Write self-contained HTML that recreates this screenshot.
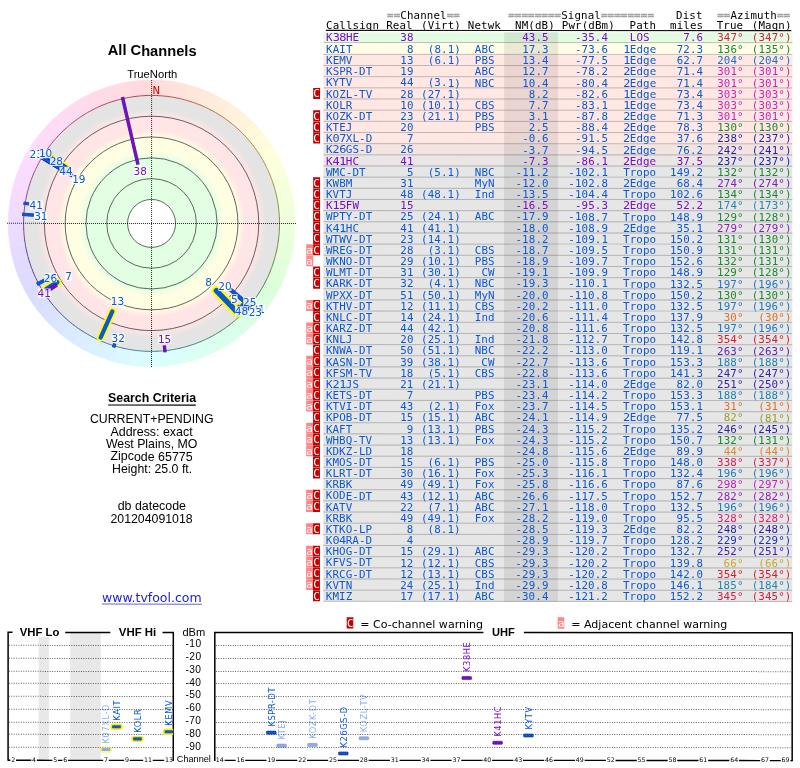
<!DOCTYPE html>
<html lang="en"><head><meta charset="utf-8"><title>TV Fool - All Channels</title>
<style>html,body{margin:0;padding:0;background:#fff}svg{display:block;will-change:transform}</style></head>
<body>
<svg width="800" height="768" viewBox="0 0 800 768">
<defs>
<radialGradient id="zones" gradientUnits="userSpaceOnUse" cx="151.5" cy="223.5" r="128">
<stop offset="0.0000" stop-color="#e3ffe3"/>
<stop offset="0.5125" stop-color="#e3ffe3"/>
<stop offset="0.5742" stop-color="#fffee3"/>
<stop offset="0.6750" stop-color="#fffee3"/>
<stop offset="0.7305" stop-color="#ffe5e5"/>
<stop offset="0.8375" stop-color="#ffe5e5"/>
<stop offset="0.8953" stop-color="#e4e4e4"/>
<stop offset="1.0000" stop-color="#e4e4e4"/>
</radialGradient>
<clipPath id="cv"><rect x="0" y="600" width="173.4" height="160"/></clipPath>
<clipPath id="cu"><rect x="214.9" y="600" width="577.4" height="160"/></clipPath>
</defs>
<rect width="800" height="768" fill="#fff"/>
<g transform="rotate(0.02 400 384)">
<g id="radar">
<path d="M151.5 223.5 L144.00 80.30 A143.4 143.4 0 0 1 159.00 80.30 Z" fill="#ffdbdb" stroke="#ffdbdb" stroke-width="0.5"/>
<path d="M151.5 223.5 L159.00 80.30 A143.4 143.4 0 0 1 173.93 81.87 Z" fill="#ffdfdb" stroke="#ffdfdb" stroke-width="0.5"/>
<path d="M151.5 223.5 L173.93 81.87 A143.4 143.4 0 0 1 188.61 84.99 Z" fill="#ffe2db" stroke="#ffe2db" stroke-width="0.5"/>
<path d="M151.5 223.5 L188.61 84.99 A143.4 143.4 0 0 1 202.89 89.62 Z" fill="#ffe6db" stroke="#ffe6db" stroke-width="0.5"/>
<path d="M151.5 223.5 L202.89 89.62 A143.4 143.4 0 0 1 216.60 95.73 Z" fill="#ffeadb" stroke="#ffeadb" stroke-width="0.5"/>
<path d="M151.5 223.5 L216.60 95.73 A143.4 143.4 0 0 1 229.60 103.23 Z" fill="#ffeddb" stroke="#ffeddb" stroke-width="0.5"/>
<path d="M151.5 223.5 L229.60 103.23 A143.4 143.4 0 0 1 241.74 112.06 Z" fill="#fff1db" stroke="#fff1db" stroke-width="0.5"/>
<path d="M151.5 223.5 L241.74 112.06 A143.4 143.4 0 0 1 252.90 122.10 Z" fill="#fff4db" stroke="#fff4db" stroke-width="0.5"/>
<path d="M151.5 223.5 L252.90 122.10 A143.4 143.4 0 0 1 262.94 133.26 Z" fill="#fff8db" stroke="#fff8db" stroke-width="0.5"/>
<path d="M151.5 223.5 L262.94 133.26 A143.4 143.4 0 0 1 271.77 145.40 Z" fill="#fffbdb" stroke="#fffbdb" stroke-width="0.5"/>
<path d="M151.5 223.5 L271.77 145.40 A143.4 143.4 0 0 1 279.27 158.40 Z" fill="#ffffdb" stroke="#ffffdb" stroke-width="0.5"/>
<path d="M151.5 223.5 L279.27 158.40 A143.4 143.4 0 0 1 285.38 172.11 Z" fill="#fbffdb" stroke="#fbffdb" stroke-width="0.5"/>
<path d="M151.5 223.5 L285.38 172.11 A143.4 143.4 0 0 1 290.01 186.39 Z" fill="#f8ffdb" stroke="#f8ffdb" stroke-width="0.5"/>
<path d="M151.5 223.5 L290.01 186.39 A143.4 143.4 0 0 1 293.13 201.07 Z" fill="#f4ffdb" stroke="#f4ffdb" stroke-width="0.5"/>
<path d="M151.5 223.5 L293.13 201.07 A143.4 143.4 0 0 1 294.70 216.00 Z" fill="#f1ffdb" stroke="#f1ffdb" stroke-width="0.5"/>
<path d="M151.5 223.5 L294.70 216.00 A143.4 143.4 0 0 1 294.70 231.00 Z" fill="#edffdb" stroke="#edffdb" stroke-width="0.5"/>
<path d="M151.5 223.5 L294.70 231.00 A143.4 143.4 0 0 1 293.13 245.93 Z" fill="#eaffdb" stroke="#eaffdb" stroke-width="0.5"/>
<path d="M151.5 223.5 L293.13 245.93 A143.4 143.4 0 0 1 290.01 260.61 Z" fill="#e6ffdb" stroke="#e6ffdb" stroke-width="0.5"/>
<path d="M151.5 223.5 L290.01 260.61 A143.4 143.4 0 0 1 285.38 274.89 Z" fill="#e2ffdb" stroke="#e2ffdb" stroke-width="0.5"/>
<path d="M151.5 223.5 L285.38 274.89 A143.4 143.4 0 0 1 279.27 288.60 Z" fill="#dfffdb" stroke="#dfffdb" stroke-width="0.5"/>
<path d="M151.5 223.5 L279.27 288.60 A143.4 143.4 0 0 1 271.77 301.60 Z" fill="#dbffdb" stroke="#dbffdb" stroke-width="0.5"/>
<path d="M151.5 223.5 L271.77 301.60 A143.4 143.4 0 0 1 262.94 313.74 Z" fill="#dbffdf" stroke="#dbffdf" stroke-width="0.5"/>
<path d="M151.5 223.5 L262.94 313.74 A143.4 143.4 0 0 1 252.90 324.90 Z" fill="#dbffe2" stroke="#dbffe2" stroke-width="0.5"/>
<path d="M151.5 223.5 L252.90 324.90 A143.4 143.4 0 0 1 241.74 334.94 Z" fill="#dbffe6" stroke="#dbffe6" stroke-width="0.5"/>
<path d="M151.5 223.5 L241.74 334.94 A143.4 143.4 0 0 1 229.60 343.77 Z" fill="#dbffea" stroke="#dbffea" stroke-width="0.5"/>
<path d="M151.5 223.5 L229.60 343.77 A143.4 143.4 0 0 1 216.60 351.27 Z" fill="#dbffed" stroke="#dbffed" stroke-width="0.5"/>
<path d="M151.5 223.5 L216.60 351.27 A143.4 143.4 0 0 1 202.89 357.38 Z" fill="#dbfff1" stroke="#dbfff1" stroke-width="0.5"/>
<path d="M151.5 223.5 L202.89 357.38 A143.4 143.4 0 0 1 188.61 362.01 Z" fill="#dbfff4" stroke="#dbfff4" stroke-width="0.5"/>
<path d="M151.5 223.5 L188.61 362.01 A143.4 143.4 0 0 1 173.93 365.13 Z" fill="#dbfff8" stroke="#dbfff8" stroke-width="0.5"/>
<path d="M151.5 223.5 L173.93 365.13 A143.4 143.4 0 0 1 159.00 366.70 Z" fill="#dbfffb" stroke="#dbfffb" stroke-width="0.5"/>
<path d="M151.5 223.5 L159.00 366.70 A143.4 143.4 0 0 1 144.00 366.70 Z" fill="#dbffff" stroke="#dbffff" stroke-width="0.5"/>
<path d="M151.5 223.5 L144.00 366.70 A143.4 143.4 0 0 1 129.07 365.13 Z" fill="#dbfbff" stroke="#dbfbff" stroke-width="0.5"/>
<path d="M151.5 223.5 L129.07 365.13 A143.4 143.4 0 0 1 114.39 362.01 Z" fill="#dbf8ff" stroke="#dbf8ff" stroke-width="0.5"/>
<path d="M151.5 223.5 L114.39 362.01 A143.4 143.4 0 0 1 100.11 357.38 Z" fill="#dbf4ff" stroke="#dbf4ff" stroke-width="0.5"/>
<path d="M151.5 223.5 L100.11 357.38 A143.4 143.4 0 0 1 86.40 351.27 Z" fill="#dbf1ff" stroke="#dbf1ff" stroke-width="0.5"/>
<path d="M151.5 223.5 L86.40 351.27 A143.4 143.4 0 0 1 73.40 343.77 Z" fill="#dbedff" stroke="#dbedff" stroke-width="0.5"/>
<path d="M151.5 223.5 L73.40 343.77 A143.4 143.4 0 0 1 61.26 334.94 Z" fill="#dbeaff" stroke="#dbeaff" stroke-width="0.5"/>
<path d="M151.5 223.5 L61.26 334.94 A143.4 143.4 0 0 1 50.10 324.90 Z" fill="#dbe6ff" stroke="#dbe6ff" stroke-width="0.5"/>
<path d="M151.5 223.5 L50.10 324.90 A143.4 143.4 0 0 1 40.06 313.74 Z" fill="#dbe2ff" stroke="#dbe2ff" stroke-width="0.5"/>
<path d="M151.5 223.5 L40.06 313.74 A143.4 143.4 0 0 1 31.23 301.60 Z" fill="#dbdfff" stroke="#dbdfff" stroke-width="0.5"/>
<path d="M151.5 223.5 L31.23 301.60 A143.4 143.4 0 0 1 23.73 288.60 Z" fill="#dbdbff" stroke="#dbdbff" stroke-width="0.5"/>
<path d="M151.5 223.5 L23.73 288.60 A143.4 143.4 0 0 1 17.62 274.89 Z" fill="#dfdbff" stroke="#dfdbff" stroke-width="0.5"/>
<path d="M151.5 223.5 L17.62 274.89 A143.4 143.4 0 0 1 12.99 260.61 Z" fill="#e2dbff" stroke="#e2dbff" stroke-width="0.5"/>
<path d="M151.5 223.5 L12.99 260.61 A143.4 143.4 0 0 1 9.87 245.93 Z" fill="#e6dbff" stroke="#e6dbff" stroke-width="0.5"/>
<path d="M151.5 223.5 L9.87 245.93 A143.4 143.4 0 0 1 8.30 231.00 Z" fill="#eadbff" stroke="#eadbff" stroke-width="0.5"/>
<path d="M151.5 223.5 L8.30 231.00 A143.4 143.4 0 0 1 8.30 216.00 Z" fill="#eddbff" stroke="#eddbff" stroke-width="0.5"/>
<path d="M151.5 223.5 L8.30 216.00 A143.4 143.4 0 0 1 9.87 201.07 Z" fill="#f1dbff" stroke="#f1dbff" stroke-width="0.5"/>
<path d="M151.5 223.5 L9.87 201.07 A143.4 143.4 0 0 1 12.99 186.39 Z" fill="#f4dbff" stroke="#f4dbff" stroke-width="0.5"/>
<path d="M151.5 223.5 L12.99 186.39 A143.4 143.4 0 0 1 17.62 172.11 Z" fill="#f8dbff" stroke="#f8dbff" stroke-width="0.5"/>
<path d="M151.5 223.5 L17.62 172.11 A143.4 143.4 0 0 1 23.73 158.40 Z" fill="#fbdbff" stroke="#fbdbff" stroke-width="0.5"/>
<path d="M151.5 223.5 L23.73 158.40 A143.4 143.4 0 0 1 31.23 145.40 Z" fill="#ffdbff" stroke="#ffdbff" stroke-width="0.5"/>
<path d="M151.5 223.5 L31.23 145.40 A143.4 143.4 0 0 1 40.06 133.26 Z" fill="#ffdbfb" stroke="#ffdbfb" stroke-width="0.5"/>
<path d="M151.5 223.5 L40.06 133.26 A143.4 143.4 0 0 1 50.10 122.10 Z" fill="#ffdbf8" stroke="#ffdbf8" stroke-width="0.5"/>
<path d="M151.5 223.5 L50.10 122.10 A143.4 143.4 0 0 1 61.26 112.06 Z" fill="#ffdbf4" stroke="#ffdbf4" stroke-width="0.5"/>
<path d="M151.5 223.5 L61.26 112.06 A143.4 143.4 0 0 1 73.40 103.23 Z" fill="#ffdbf1" stroke="#ffdbf1" stroke-width="0.5"/>
<path d="M151.5 223.5 L73.40 103.23 A143.4 143.4 0 0 1 86.40 95.73 Z" fill="#ffdbed" stroke="#ffdbed" stroke-width="0.5"/>
<path d="M151.5 223.5 L86.40 95.73 A143.4 143.4 0 0 1 100.11 89.62 Z" fill="#ffdbea" stroke="#ffdbea" stroke-width="0.5"/>
<path d="M151.5 223.5 L100.11 89.62 A143.4 143.4 0 0 1 114.39 84.99 Z" fill="#ffdbe6" stroke="#ffdbe6" stroke-width="0.5"/>
<path d="M151.5 223.5 L114.39 84.99 A143.4 143.4 0 0 1 129.07 81.87 Z" fill="#ffdbe2" stroke="#ffdbe2" stroke-width="0.5"/>
<path d="M151.5 223.5 L129.07 81.87 A143.4 143.4 0 0 1 144.00 80.30 Z" fill="#ffdbdf" stroke="#ffdbdf" stroke-width="0.5"/>
<circle cx="151.5" cy="223.5" r="128" fill="url(#zones)"/>
<circle cx="151.5" cy="223.5" r="24" fill="#fff"/>
<path d="M145.69 95.63 A128 128 0 0 1 157.31 95.63" fill="none" stroke="#9b161d" stroke-width="0.8" stroke-opacity="0.9"/>
<path d="M156.86 95.61 A128 128 0 0 1 168.43 96.62" fill="none" stroke="#9c1f1d" stroke-width="0.8" stroke-opacity="0.9"/>
<path d="M167.99 96.57 A128 128 0 0 1 179.42 98.58" fill="none" stroke="#9c291d" stroke-width="0.8" stroke-opacity="0.9"/>
<path d="M178.99 98.49 A128 128 0 0 1 190.20 101.49" fill="none" stroke="#9d321d" stroke-width="0.8" stroke-opacity="0.9"/>
<path d="M189.78 101.36 A128 128 0 0 1 200.69 105.33" fill="none" stroke="#9e3c1d" stroke-width="0.8" stroke-opacity="0.9"/>
<path d="M200.28 105.16 A128 128 0 0 1 210.80 110.07" fill="none" stroke="#9f461d" stroke-width="0.8" stroke-opacity="0.9"/>
<path d="M210.41 109.86 A128 128 0 0 1 220.46 115.67" fill="none" stroke="#a04f1d" stroke-width="0.8" stroke-opacity="0.9"/>
<path d="M220.09 115.43 A128 128 0 0 1 229.60 122.09" fill="none" stroke="#9f561d" stroke-width="0.8" stroke-opacity="0.9"/>
<path d="M229.24 121.81 A128 128 0 0 1 238.14 129.28" fill="none" stroke="#9e5e1d" stroke-width="0.8" stroke-opacity="0.9"/>
<path d="M237.81 128.98 A128 128 0 0 1 246.02 137.19" fill="none" stroke="#9d651d" stroke-width="0.8" stroke-opacity="0.9"/>
<path d="M245.72 136.86 A128 128 0 0 1 253.19 145.76" fill="none" stroke="#9a6a1d" stroke-width="0.8" stroke-opacity="0.9"/>
<path d="M252.91 145.40 A128 128 0 0 1 259.57 154.91" fill="none" stroke="#966f1d" stroke-width="0.8" stroke-opacity="0.9"/>
<path d="M259.33 154.54 A128 128 0 0 1 265.14 164.59" fill="none" stroke="#94741d" stroke-width="0.8" stroke-opacity="0.9"/>
<path d="M264.93 164.20 A128 128 0 0 1 269.84 174.72" fill="none" stroke="#917a1d" stroke-width="0.8" stroke-opacity="0.9"/>
<path d="M269.67 174.31 A128 128 0 0 1 273.64 185.22" fill="none" stroke="#87791d" stroke-width="0.8" stroke-opacity="0.9"/>
<path d="M273.51 184.80 A128 128 0 0 1 276.51 196.01" fill="none" stroke="#7c761d" stroke-width="0.8" stroke-opacity="0.9"/>
<path d="M276.42 195.58 A128 128 0 0 1 278.43 207.01" fill="none" stroke="#70741d" stroke-width="0.8" stroke-opacity="0.9"/>
<path d="M278.38 206.57 A128 128 0 0 1 279.39 218.14" fill="none" stroke="#66721d" stroke-width="0.8" stroke-opacity="0.9"/>
<path d="M279.37 217.69 A128 128 0 0 1 279.37 229.31" fill="none" stroke="#5a701d" stroke-width="0.8" stroke-opacity="0.9"/>
<path d="M279.39 228.86 A128 128 0 0 1 278.38 240.43" fill="none" stroke="#4e6e1d" stroke-width="0.8" stroke-opacity="0.9"/>
<path d="M278.43 239.99 A128 128 0 0 1 276.42 251.42" fill="none" stroke="#436d1d" stroke-width="0.8" stroke-opacity="0.9"/>
<path d="M276.51 250.99 A128 128 0 0 1 273.51 262.20" fill="none" stroke="#376b1d" stroke-width="0.8" stroke-opacity="0.9"/>
<path d="M273.64 261.78 A128 128 0 0 1 269.67 272.69" fill="none" stroke="#2d681d" stroke-width="0.8" stroke-opacity="0.9"/>
<path d="M269.84 272.28 A128 128 0 0 1 264.93 282.80" fill="none" stroke="#21671d" stroke-width="0.8" stroke-opacity="0.9"/>
<path d="M265.14 282.41 A128 128 0 0 1 259.33 292.46" fill="none" stroke="#16651d" stroke-width="0.8" stroke-opacity="0.9"/>
<path d="M259.57 292.09 A128 128 0 0 1 252.91 301.60" fill="none" stroke="#14631f" stroke-width="0.8" stroke-opacity="0.9"/>
<path d="M253.19 301.24 A128 128 0 0 1 245.72 310.14" fill="none" stroke="#136322" stroke-width="0.8" stroke-opacity="0.9"/>
<path d="M246.02 309.81 A128 128 0 0 1 237.81 318.02" fill="none" stroke="#126124" stroke-width="0.8" stroke-opacity="0.9"/>
<path d="M238.14 317.72 A128 128 0 0 1 229.24 325.19" fill="none" stroke="#13622f" stroke-width="0.8" stroke-opacity="0.9"/>
<path d="M229.60 324.91 A128 128 0 0 1 220.09 331.57" fill="none" stroke="#13623a" stroke-width="0.8" stroke-opacity="0.9"/>
<path d="M220.46 331.33 A128 128 0 0 1 210.41 337.14" fill="none" stroke="#136345" stroke-width="0.8" stroke-opacity="0.9"/>
<path d="M210.80 336.93 A128 128 0 0 1 200.28 341.84" fill="none" stroke="#146351" stroke-width="0.8" stroke-opacity="0.9"/>
<path d="M200.69 341.67 A128 128 0 0 1 189.78 345.64" fill="none" stroke="#14635b" stroke-width="0.8" stroke-opacity="0.9"/>
<path d="M190.20 345.51 A128 128 0 0 1 178.99 348.51" fill="none" stroke="#156466" stroke-width="0.8" stroke-opacity="0.9"/>
<path d="M179.42 348.42 A128 128 0 0 1 167.99 350.43" fill="none" stroke="#156472" stroke-width="0.8" stroke-opacity="0.9"/>
<path d="M168.43 350.38 A128 128 0 0 1 156.86 351.39" fill="none" stroke="#16647b" stroke-width="0.8" stroke-opacity="0.9"/>
<path d="M157.31 351.37 A128 128 0 0 1 145.69 351.37" fill="none" stroke="#16627d" stroke-width="0.8" stroke-opacity="0.9"/>
<path d="M146.14 351.39 A128 128 0 0 1 134.57 350.38" fill="none" stroke="#165f80" stroke-width="0.8" stroke-opacity="0.9"/>
<path d="M135.01 350.43 A128 128 0 0 1 123.58 348.42" fill="none" stroke="#165c83" stroke-width="0.8" stroke-opacity="0.9"/>
<path d="M124.01 348.51 A128 128 0 0 1 112.80 345.51" fill="none" stroke="#165788" stroke-width="0.8" stroke-opacity="0.9"/>
<path d="M113.22 345.64 A128 128 0 0 1 102.31 341.67" fill="none" stroke="#16538c" stroke-width="0.8" stroke-opacity="0.9"/>
<path d="M102.72 341.84 A128 128 0 0 1 92.20 336.93" fill="none" stroke="#164e8f" stroke-width="0.8" stroke-opacity="0.9"/>
<path d="M92.59 337.14 A128 128 0 0 1 82.54 331.33" fill="none" stroke="#16458c" stroke-width="0.8" stroke-opacity="0.9"/>
<path d="M82.91 331.57 A128 128 0 0 1 73.40 324.91" fill="none" stroke="#163c89" stroke-width="0.8" stroke-opacity="0.9"/>
<path d="M73.76 325.19 A128 128 0 0 1 64.86 317.72" fill="none" stroke="#163486" stroke-width="0.8" stroke-opacity="0.9"/>
<path d="M65.19 318.02 A128 128 0 0 1 56.98 309.81" fill="none" stroke="#162c82" stroke-width="0.8" stroke-opacity="0.9"/>
<path d="M57.28 310.14 A128 128 0 0 1 49.81 301.24" fill="none" stroke="#16237f" stroke-width="0.8" stroke-opacity="0.9"/>
<path d="M50.09 301.60 A128 128 0 0 1 43.43 292.09" fill="none" stroke="#161b7d" stroke-width="0.8" stroke-opacity="0.9"/>
<path d="M43.67 292.46 A128 128 0 0 1 37.86 282.41" fill="none" stroke="#18167b" stroke-width="0.8" stroke-opacity="0.9"/>
<path d="M38.07 282.80 A128 128 0 0 1 33.16 272.28" fill="none" stroke="#1e167d" stroke-width="0.8" stroke-opacity="0.9"/>
<path d="M33.33 272.69 A128 128 0 0 1 29.36 261.78" fill="none" stroke="#24167e" stroke-width="0.8" stroke-opacity="0.9"/>
<path d="M29.49 262.20 A128 128 0 0 1 26.49 250.99" fill="none" stroke="#2f167f" stroke-width="0.8" stroke-opacity="0.9"/>
<path d="M26.58 251.42 A128 128 0 0 1 24.57 239.99" fill="none" stroke="#3a1681" stroke-width="0.8" stroke-opacity="0.9"/>
<path d="M24.62 240.43 A128 128 0 0 1 23.61 228.86" fill="none" stroke="#451682" stroke-width="0.8" stroke-opacity="0.9"/>
<path d="M23.63 229.31 A128 128 0 0 1 23.63 217.69" fill="none" stroke="#511683" stroke-width="0.8" stroke-opacity="0.9"/>
<path d="M23.61 218.14 A128 128 0 0 1 24.62 206.57" fill="none" stroke="#5c1684" stroke-width="0.8" stroke-opacity="0.9"/>
<path d="M24.57 207.01 A128 128 0 0 1 26.58 195.58" fill="none" stroke="#671685" stroke-width="0.8" stroke-opacity="0.9"/>
<path d="M26.49 196.01 A128 128 0 0 1 29.49 184.80" fill="none" stroke="#721685" stroke-width="0.8" stroke-opacity="0.9"/>
<path d="M29.36 185.22 A128 128 0 0 1 33.33 174.31" fill="none" stroke="#7c1685" stroke-width="0.8" stroke-opacity="0.9"/>
<path d="M33.16 174.72 A128 128 0 0 1 38.07 164.20" fill="none" stroke="#871685" stroke-width="0.8" stroke-opacity="0.9"/>
<path d="M37.86 164.59 A128 128 0 0 1 43.67 154.54" fill="none" stroke="#911685" stroke-width="0.8" stroke-opacity="0.9"/>
<path d="M43.43 154.91 A128 128 0 0 1 50.09 145.40" fill="none" stroke="#94167d" stroke-width="0.8" stroke-opacity="0.9"/>
<path d="M49.81 145.76 A128 128 0 0 1 57.28 136.86" fill="none" stroke="#961673" stroke-width="0.8" stroke-opacity="0.9"/>
<path d="M56.98 137.19 A128 128 0 0 1 65.19 128.98" fill="none" stroke="#971669" stroke-width="0.8" stroke-opacity="0.9"/>
<path d="M64.86 129.28 A128 128 0 0 1 73.76 121.81" fill="none" stroke="#99165f" stroke-width="0.8" stroke-opacity="0.9"/>
<path d="M73.40 122.09 A128 128 0 0 1 82.91 115.43" fill="none" stroke="#9a1655" stroke-width="0.8" stroke-opacity="0.9"/>
<path d="M82.54 115.67 A128 128 0 0 1 92.59 109.86" fill="none" stroke="#9b164b" stroke-width="0.8" stroke-opacity="0.9"/>
<path d="M92.20 110.07 A128 128 0 0 1 102.72 105.16" fill="none" stroke="#9b1641" stroke-width="0.8" stroke-opacity="0.9"/>
<path d="M102.31 105.33 A128 128 0 0 1 113.22 101.36" fill="none" stroke="#9b1636" stroke-width="0.8" stroke-opacity="0.9"/>
<path d="M112.80 101.49 A128 128 0 0 1 124.01 98.49" fill="none" stroke="#9b162c" stroke-width="0.8" stroke-opacity="0.9"/>
<path d="M123.58 98.58 A128 128 0 0 1 135.01 96.57" fill="none" stroke="#9b1625" stroke-width="0.8" stroke-opacity="0.9"/>
<path d="M134.57 96.62 A128 128 0 0 1 146.14 95.61" fill="none" stroke="#9b1621" stroke-width="0.8" stroke-opacity="0.9"/>
<circle cx="151.5" cy="223.5" r="24" fill="none" stroke="#333" stroke-width="0.75"/>
<circle cx="151.5" cy="223.5" r="44.8" fill="none" stroke="#333" stroke-width="0.75"/>
<circle cx="151.5" cy="223.5" r="65.6" fill="none" stroke="#333" stroke-width="0.75"/>
<circle cx="151.5" cy="223.5" r="86.4" fill="none" stroke="#333" stroke-width="0.75"/>
<circle cx="151.5" cy="223.5" r="107.2" fill="none" stroke="#333" stroke-width="0.75"/>
<path d="M7 223.5 H296 M151.5 80 V367" stroke="#000" stroke-opacity="0.85" stroke-width="1" stroke-dasharray="1 1" fill="none"/>
<line x1="242.78" y1="305.69" x2="243.67" y2="306.49" stroke="#ffff00" stroke-width="9.55" stroke-linecap="round"/>
<line x1="242.78" y1="305.69" x2="243.67" y2="306.49" stroke="#0a58d6" stroke-width="5.25" stroke-linecap="round"/>
<line x1="57.19" y1="282.43" x2="45.82" y2="289.54" stroke="#ffff00" stroke-width="8.37" stroke-linecap="round"/>
<line x1="57.19" y1="282.43" x2="45.82" y2="289.54" stroke="#0a58d6" stroke-width="4.60" stroke-linecap="round"/>
<line x1="65.43" y1="167.61" x2="47.03" y2="155.66" stroke="#ffff00" stroke-width="8.47" stroke-linecap="round"/>
<line x1="65.43" y1="167.61" x2="47.03" y2="155.66" stroke="#0a58d6" stroke-width="4.65" stroke-linecap="round"/>
<line x1="112.31" y1="311.52" x2="100.69" y2="337.61" stroke="#ffff00" stroke-width="7.77" stroke-linecap="round"/>
<line x1="112.31" y1="311.52" x2="100.69" y2="337.61" stroke="#0a58d6" stroke-width="4.27" stroke-linecap="round"/>
<line x1="216.34" y1="290.65" x2="237.54" y2="312.60" stroke="#ffff00" stroke-width="9.87" stroke-linecap="round"/>
<line x1="216.34" y1="290.65" x2="237.54" y2="312.60" stroke="#0a58d6" stroke-width="5.42" stroke-linecap="round"/>
<line x1="114.29" y1="345.21" x2="114.08" y2="345.91" stroke="#0a1c60" stroke-width="3.51" stroke-opacity="0.8" stroke-linecap="square"/>
<line x1="114.29" y1="345.21" x2="114.08" y2="345.91" stroke="#0a58d6" stroke-width="2.61" stroke-linecap="square"/>
<line x1="250.25" y1="303.46" x2="250.97" y2="304.05" stroke="#0a1c60" stroke-width="4.12" stroke-opacity="0.8" stroke-linecap="square"/>
<line x1="250.25" y1="303.46" x2="250.97" y2="304.05" stroke="#0a58d6" stroke-width="3.22" stroke-linecap="square"/>
<line x1="245.77" y1="308.38" x2="246.62" y2="309.15" stroke="#0a1c60" stroke-width="4.26" stroke-opacity="0.8" stroke-linecap="square"/>
<line x1="245.77" y1="308.38" x2="246.62" y2="309.15" stroke="#0a58d6" stroke-width="3.36" stroke-linecap="square"/>
<line x1="247.08" y1="306.59" x2="248.10" y2="307.48" stroke="#0a1c60" stroke-width="4.21" stroke-opacity="0.8" stroke-linecap="square"/>
<line x1="247.08" y1="306.59" x2="248.10" y2="307.48" stroke="#0a58d6" stroke-width="3.31" stroke-linecap="square"/>
<line x1="246.69" y1="306.25" x2="248.10" y2="307.48" stroke="#0a1c60" stroke-width="4.21" stroke-opacity="0.8" stroke-linecap="square"/>
<line x1="246.69" y1="306.25" x2="248.10" y2="307.48" stroke="#0a58d6" stroke-width="3.31" stroke-linecap="square"/>
<line x1="27.13" y1="203.80" x2="25.08" y2="203.48" stroke="#0a1c60" stroke-width="3.43" stroke-opacity="0.8" stroke-linecap="square"/>
<line x1="27.13" y1="203.80" x2="25.08" y2="203.48" stroke="#0a58d6" stroke-width="2.53" stroke-linecap="square"/>
<line x1="249.28" y1="302.68" x2="250.97" y2="304.05" stroke="#0a1c60" stroke-width="4.12" stroke-opacity="0.8" stroke-linecap="square"/>
<line x1="249.28" y1="302.68" x2="250.97" y2="304.05" stroke="#0a58d6" stroke-width="3.22" stroke-linecap="square"/>
<line x1="164.50" y1="347.18" x2="164.88" y2="350.80" stroke="#2a0a66" stroke-width="3.41" stroke-opacity="0.8" stroke-linecap="square"/>
<line x1="164.50" y1="347.18" x2="164.88" y2="350.80" stroke="#7a0acc" stroke-width="2.51" stroke-linecap="square"/>
<line x1="238.71" y1="307.72" x2="243.58" y2="312.42" stroke="#0a1c60" stroke-width="4.38" stroke-opacity="0.8" stroke-linecap="square"/>
<line x1="238.71" y1="307.72" x2="243.58" y2="312.42" stroke="#0a58d6" stroke-width="3.48" stroke-linecap="square"/>
<line x1="32.11" y1="215.15" x2="23.81" y2="214.57" stroke="#0a1c60" stroke-width="3.41" stroke-opacity="0.8" stroke-linecap="square"/>
<line x1="32.11" y1="215.15" x2="23.81" y2="214.57" stroke="#0a58d6" stroke-width="2.51" stroke-linecap="square"/>
<line x1="55.23" y1="286.02" x2="44.15" y2="293.21" stroke="#2a0a66" stroke-width="3.88" stroke-opacity="0.8" stroke-linecap="square"/>
<line x1="55.23" y1="286.02" x2="44.15" y2="293.21" stroke="#7a0acc" stroke-width="2.98" stroke-linecap="square"/>
<line x1="53.45" y1="275.63" x2="38.48" y2="283.59" stroke="#0a1c60" stroke-width="3.73" stroke-opacity="0.8" stroke-linecap="square"/>
<line x1="53.45" y1="275.63" x2="38.48" y2="283.59" stroke="#0a58d6" stroke-width="2.83" stroke-linecap="square"/>
<line x1="231.63" y1="290.74" x2="249.55" y2="305.78" stroke="#0a1c60" stroke-width="4.16" stroke-opacity="0.8" stroke-linecap="square"/>
<line x1="231.63" y1="290.74" x2="249.55" y2="305.78" stroke="#0a58d6" stroke-width="3.26" stroke-linecap="square"/>
<line x1="62.38" y1="169.95" x2="41.78" y2="157.58" stroke="#0a1c60" stroke-width="3.82" stroke-opacity="0.8" stroke-linecap="square"/>
<line x1="62.38" y1="169.95" x2="41.78" y2="157.58" stroke="#0a58d6" stroke-width="2.92" stroke-linecap="square"/>
<line x1="68.75" y1="169.76" x2="44.15" y2="153.79" stroke="#0a1c60" stroke-width="3.88" stroke-opacity="0.8" stroke-linecap="square"/>
<line x1="68.75" y1="169.76" x2="44.15" y2="153.79" stroke="#0a58d6" stroke-width="2.98" stroke-linecap="square"/>
<line x1="68.88" y1="173.86" x2="41.78" y2="157.58" stroke="#0a1c60" stroke-width="3.82" stroke-opacity="0.8" stroke-linecap="square"/>
<line x1="68.88" y1="173.86" x2="41.78" y2="157.58" stroke="#0a58d6" stroke-width="2.92" stroke-linecap="square"/>
<line x1="70.93" y1="175.09" x2="41.78" y2="157.58" stroke="#0a1c60" stroke-width="3.82" stroke-opacity="0.8" stroke-linecap="square"/>
<line x1="70.93" y1="175.09" x2="41.78" y2="157.58" stroke="#0a58d6" stroke-width="2.92" stroke-linecap="square"/>
<line x1="137.56" y1="163.13" x2="122.71" y2="98.78" stroke="#2a0a66" stroke-width="3.47" stroke-opacity="0.8" stroke-linecap="square"/>
<line x1="137.56" y1="163.13" x2="122.71" y2="98.78" stroke="#7a0acc" stroke-width="2.57" stroke-linecap="square"/>
<rect x="111.70" y="333.35" width="13.00" height="9.3" fill="#fff" fill-opacity="0.87"/>
<text x="118.20" y="341.85" font-family='"DejaVu Sans", "Liberation Sans", sans-serif' font-size="10.5" text-anchor="middle" fill="#0a58d6">32</text>
<rect x="251.80" y="304.65" width="13.00" height="9.3" fill="#fff" fill-opacity="0.87"/>
<text x="258.30" y="313.15" font-family='"DejaVu Sans", "Liberation Sans", sans-serif' font-size="10.5" text-anchor="middle" fill="#0a58d6">31</text>
<rect x="248.80" y="307.35" width="13.00" height="9.3" fill="#fff" fill-opacity="0.87"/>
<text x="255.30" y="315.85" font-family='"DejaVu Sans", "Liberation Sans", sans-serif' font-size="10.5" text-anchor="middle" fill="#0a58d6">23</text>
<rect x="29.70" y="200.55" width="13.00" height="9.3" fill="#fff" fill-opacity="0.87"/>
<text x="36.20" y="209.05" font-family='"DejaVu Sans", "Liberation Sans", sans-serif' font-size="10.5" text-anchor="middle" fill="#0a58d6">41</text>
<rect x="243.20" y="297.35" width="13.00" height="9.3" fill="#fff" fill-opacity="0.87"/>
<text x="249.70" y="305.85" font-family='"DejaVu Sans", "Liberation Sans", sans-serif' font-size="10.5" text-anchor="middle" fill="#0a58d6">25</text>
<rect x="158.10" y="334.65" width="13.00" height="9.3" fill="#fff" fill-opacity="0.87"/>
<text x="164.60" y="343.15" font-family='"DejaVu Sans", "Liberation Sans", sans-serif' font-size="10.5" text-anchor="middle" fill="#7a0acc">15</text>
<rect x="234.90" y="306.25" width="13.00" height="9.3" fill="#fff" fill-opacity="0.87"/>
<text x="241.40" y="314.75" font-family='"DejaVu Sans", "Liberation Sans", sans-serif' font-size="10.5" text-anchor="middle" fill="#0a58d6">48</text>
<rect x="34.30" y="211.75" width="13.00" height="9.3" fill="#fff" fill-opacity="0.87"/>
<text x="40.80" y="220.25" font-family='"DejaVu Sans", "Liberation Sans", sans-serif' font-size="10.5" text-anchor="middle" fill="#0a58d6">31</text>
<rect x="230.95" y="294.25" width="6.60" height="9.3" fill="#fff" fill-opacity="0.87"/>
<text x="234.25" y="302.75" font-family='"DejaVu Sans", "Liberation Sans", sans-serif' font-size="10.5" text-anchor="middle" fill="#0a58d6">5</text>
<rect x="37.70" y="288.65" width="13.00" height="9.3" fill="#fff" fill-opacity="0.87"/>
<text x="44.20" y="297.15" font-family='"DejaVu Sans", "Liberation Sans", sans-serif' font-size="10.5" text-anchor="middle" fill="#7a0acc">41</text>
<rect x="44.00" y="273.15" width="13.00" height="9.3" fill="#fff" fill-opacity="0.87"/>
<text x="50.50" y="281.65" font-family='"DejaVu Sans", "Liberation Sans", sans-serif' font-size="10.5" text-anchor="middle" fill="#0a58d6">26</text>
<rect x="65.20" y="271.65" width="6.60" height="9.3" fill="#fff" fill-opacity="0.87"/>
<text x="68.50" y="280.15" font-family='"DejaVu Sans", "Liberation Sans", sans-serif' font-size="10.5" text-anchor="middle" fill="#0a58d6">7</text>
<rect x="218.40" y="281.75" width="13.00" height="9.3" fill="#fff" fill-opacity="0.87"/>
<text x="224.90" y="290.25" font-family='"DejaVu Sans", "Liberation Sans", sans-serif' font-size="10.5" text-anchor="middle" fill="#0a58d6">20</text>
<rect x="29.60" y="149.65" width="13.00" height="9.3" fill="#fff" fill-opacity="0.87"/>
<text x="36.10" y="158.15" font-family='"DejaVu Sans", "Liberation Sans", sans-serif' font-size="10.5" text-anchor="middle" fill="#0a58d6">23</text>
<rect x="39.00" y="149.05" width="13.00" height="9.3" fill="#fff" fill-opacity="0.87"/>
<text x="45.50" y="157.55" font-family='"DejaVu Sans", "Liberation Sans", sans-serif' font-size="10.5" text-anchor="middle" fill="#0a58d6">10</text>
<rect x="49.80" y="156.85" width="13.00" height="9.3" fill="#fff" fill-opacity="0.87"/>
<text x="56.30" y="165.35" font-family='"DejaVu Sans", "Liberation Sans", sans-serif' font-size="10.5" text-anchor="middle" fill="#0a58d6">28</text>
<rect x="59.40" y="166.85" width="13.00" height="9.3" fill="#fff" fill-opacity="0.87"/>
<text x="65.90" y="175.35" font-family='"DejaVu Sans", "Liberation Sans", sans-serif' font-size="10.5" text-anchor="middle" fill="#0a58d6">44</text>
<rect x="72.30" y="174.95" width="13.00" height="9.3" fill="#fff" fill-opacity="0.87"/>
<text x="78.80" y="183.45" font-family='"DejaVu Sans", "Liberation Sans", sans-serif' font-size="10.5" text-anchor="middle" fill="#0a58d6">19</text>
<rect x="110.90" y="296.85" width="13.00" height="9.3" fill="#fff" fill-opacity="0.87"/>
<text x="117.40" y="305.35" font-family='"DejaVu Sans", "Liberation Sans", sans-serif' font-size="10.5" text-anchor="middle" fill="#0a58d6">13</text>
<rect x="205.30" y="277.55" width="6.60" height="9.3" fill="#fff" fill-opacity="0.87"/>
<text x="208.60" y="286.05" font-family='"DejaVu Sans", "Liberation Sans", sans-serif' font-size="10.5" text-anchor="middle" fill="#0a58d6">8</text>
<rect x="133.70" y="166.75" width="13.00" height="9.3" fill="#fff" fill-opacity="0.87"/>
<text x="140.20" y="175.25" font-family='"DejaVu Sans", "Liberation Sans", sans-serif' font-size="10.5" text-anchor="middle" fill="#7a0acc">38</text>
<text x="156.1" y="93.8" font-family='"DejaVu Sans", "Liberation Sans", sans-serif' font-size="10.2" text-anchor="middle" fill="#c00000">N</text>
</g>
<g id="left" font-family='"Liberation Sans", "DejaVu Sans", sans-serif' text-anchor="middle" fill="#000">
<text x="152.05" y="55.60" font-size="14.68" font-weight="bold">All Channels</text>
<text x="152.15" y="77.70" font-size="11.22">TrueNorth</text>
<text x="152.05" y="401.70" font-size="12.38" font-weight="bold">Search Criteria</text>
<rect x="108" y="404.6" width="87.8" height="1.1" fill="#000"/>
<text x="151.75" y="423.50" font-size="12.33">CURRENT+PENDING</text>
<text x="151.60" y="436.30" font-size="12.43">Address: exact</text>
<text x="151.65" y="448.40" font-size="12.32">West Plains, MO</text>
<text x="151.60" y="460.60" font-size="12.42">Zipcode 65775</text>
<text x="152.15" y="473.20" font-size="12.32">Height: 25.0 ft.</text>
<text x="151.85" y="509.70" font-size="12.41">db datecode</text>
<text x="151.60" y="522.70" font-size="12.32">201204091018</text>
<text x="151.9" y="602.1" font-size="12.5" font-family='"DejaVu Sans", "Liberation Sans", sans-serif' fill="#2222cc">www.tvfool.com</text>
<rect x="102" y="603.7" width="99.8" height="1" fill="#2222cc" fill-opacity="0.7"/>
</g>
<g id="table" font-family='"DejaVu Sans Mono", "Liberation Mono", monospace' font-size="10.8" letter-spacing="0.13">
<rect x="323.4" y="32.20" width="468.9" height="10.35" fill="#e4fbe4"/>
<rect x="323.4" y="42.50" width="468.9" height="11.90" fill="#fffde6"/>
<rect x="323.4" y="54.35" width="468.9" height="11.21" fill="#ffe8e4"/>
<rect x="323.4" y="65.51" width="468.9" height="11.21" fill="#ffe8e4"/>
<rect x="323.4" y="76.68" width="468.9" height="11.21" fill="#ffe8e4"/>
<rect x="323.4" y="87.84" width="468.9" height="11.21" fill="#ffe8e4"/>
<rect x="323.4" y="99.00" width="468.9" height="11.21" fill="#ffe8e4"/>
<rect x="323.4" y="110.16" width="468.9" height="11.21" fill="#ffe8e4"/>
<rect x="323.4" y="121.33" width="468.9" height="11.21" fill="#ffe8e4"/>
<rect x="323.4" y="132.49" width="468.9" height="11.21" fill="#ffe8e4"/>
<rect x="323.4" y="143.65" width="468.9" height="11.21" fill="#f3e4e2"/>
<rect x="323.4" y="154.82" width="468.9" height="11.21" fill="#e9e6e5"/>
<rect x="323.4" y="165.98" width="468.9" height="11.21" fill="#e6e6e6"/>
<rect x="323.4" y="177.14" width="468.9" height="11.21" fill="#e6e6e6"/>
<rect x="323.4" y="188.31" width="468.9" height="11.21" fill="#e6e6e6"/>
<rect x="323.4" y="199.47" width="468.9" height="11.21" fill="#e6e6e6"/>
<rect x="323.4" y="210.63" width="468.9" height="11.21" fill="#e6e6e6"/>
<rect x="323.4" y="221.79" width="468.9" height="11.21" fill="#e6e6e6"/>
<rect x="323.4" y="232.96" width="468.9" height="11.21" fill="#e6e6e6"/>
<rect x="323.4" y="244.12" width="468.9" height="11.21" fill="#e6e6e6"/>
<rect x="323.4" y="255.28" width="468.9" height="11.21" fill="#e6e6e6"/>
<rect x="323.4" y="266.45" width="468.9" height="11.21" fill="#e6e6e6"/>
<rect x="323.4" y="277.61" width="468.9" height="11.21" fill="#e6e6e6"/>
<rect x="323.4" y="288.77" width="468.9" height="11.21" fill="#e6e6e6"/>
<rect x="323.4" y="299.94" width="468.9" height="11.21" fill="#e6e6e6"/>
<rect x="323.4" y="311.10" width="468.9" height="11.21" fill="#e6e6e6"/>
<rect x="323.4" y="322.26" width="468.9" height="11.21" fill="#e6e6e6"/>
<rect x="323.4" y="333.43" width="468.9" height="11.21" fill="#e6e6e6"/>
<rect x="323.4" y="344.59" width="468.9" height="11.21" fill="#e6e6e6"/>
<rect x="323.4" y="355.75" width="468.9" height="11.21" fill="#e6e6e6"/>
<rect x="323.4" y="366.91" width="468.9" height="11.21" fill="#e6e6e6"/>
<rect x="323.4" y="378.08" width="468.9" height="11.21" fill="#e6e6e6"/>
<rect x="323.4" y="389.24" width="468.9" height="11.21" fill="#e6e6e6"/>
<rect x="323.4" y="400.40" width="468.9" height="11.21" fill="#e6e6e6"/>
<rect x="323.4" y="411.57" width="468.9" height="11.21" fill="#e6e6e6"/>
<rect x="323.4" y="422.73" width="468.9" height="11.21" fill="#e6e6e6"/>
<rect x="323.4" y="433.89" width="468.9" height="11.21" fill="#e6e6e6"/>
<rect x="323.4" y="445.06" width="468.9" height="11.21" fill="#e6e6e6"/>
<rect x="323.4" y="456.22" width="468.9" height="11.21" fill="#e6e6e6"/>
<rect x="323.4" y="467.38" width="468.9" height="11.21" fill="#e6e6e6"/>
<rect x="323.4" y="478.54" width="468.9" height="11.21" fill="#e6e6e6"/>
<rect x="323.4" y="489.71" width="468.9" height="11.21" fill="#e6e6e6"/>
<rect x="323.4" y="500.87" width="468.9" height="11.21" fill="#e6e6e6"/>
<rect x="323.4" y="512.03" width="468.9" height="11.21" fill="#e6e6e6"/>
<rect x="323.4" y="523.20" width="468.9" height="11.21" fill="#e6e6e6"/>
<rect x="323.4" y="534.36" width="468.9" height="11.21" fill="#e6e6e6"/>
<rect x="323.4" y="545.52" width="468.9" height="11.21" fill="#e6e6e6"/>
<rect x="323.4" y="556.69" width="468.9" height="11.21" fill="#e6e6e6"/>
<rect x="323.4" y="567.85" width="468.9" height="11.21" fill="#e6e6e6"/>
<rect x="323.4" y="579.01" width="468.9" height="11.21" fill="#e6e6e6"/>
<rect x="323.4" y="590.17" width="468.9" height="11.21" fill="#e6e6e6"/>
<rect x="504" y="32.20" width="54" height="569.54" fill="#000" fill-opacity="0.078"/>
<line x1="323.4" y1="42.50" x2="792.3" y2="42.50" stroke="#000" stroke-opacity="0.3" stroke-width="0.8"/>
<line x1="323.4" y1="54.35" x2="792.3" y2="54.35" stroke="#000" stroke-opacity="0.3" stroke-width="0.8"/>
<line x1="323.4" y1="65.51" x2="792.3" y2="65.51" stroke="#000" stroke-opacity="0.3" stroke-width="0.8"/>
<line x1="323.4" y1="76.68" x2="792.3" y2="76.68" stroke="#000" stroke-opacity="0.3" stroke-width="0.8"/>
<line x1="323.4" y1="87.84" x2="792.3" y2="87.84" stroke="#000" stroke-opacity="0.3" stroke-width="0.8"/>
<line x1="323.4" y1="99.00" x2="792.3" y2="99.00" stroke="#000" stroke-opacity="0.3" stroke-width="0.8"/>
<line x1="323.4" y1="110.16" x2="792.3" y2="110.16" stroke="#000" stroke-opacity="0.3" stroke-width="0.8"/>
<line x1="323.4" y1="121.33" x2="792.3" y2="121.33" stroke="#000" stroke-opacity="0.3" stroke-width="0.8"/>
<line x1="323.4" y1="132.49" x2="792.3" y2="132.49" stroke="#000" stroke-opacity="0.3" stroke-width="0.8"/>
<line x1="323.4" y1="143.65" x2="792.3" y2="143.65" stroke="#000" stroke-opacity="0.3" stroke-width="0.8"/>
<line x1="323.4" y1="154.82" x2="792.3" y2="154.82" stroke="#000" stroke-opacity="0.3" stroke-width="0.8"/>
<line x1="323.4" y1="165.98" x2="792.3" y2="165.98" stroke="#000" stroke-opacity="0.3" stroke-width="0.8"/>
<line x1="323.4" y1="177.14" x2="792.3" y2="177.14" stroke="#000" stroke-opacity="0.3" stroke-width="0.8"/>
<line x1="323.4" y1="188.31" x2="792.3" y2="188.31" stroke="#000" stroke-opacity="0.3" stroke-width="0.8"/>
<line x1="323.4" y1="199.47" x2="792.3" y2="199.47" stroke="#000" stroke-opacity="0.3" stroke-width="0.8"/>
<line x1="323.4" y1="210.63" x2="792.3" y2="210.63" stroke="#000" stroke-opacity="0.3" stroke-width="0.8"/>
<line x1="323.4" y1="221.79" x2="792.3" y2="221.79" stroke="#000" stroke-opacity="0.3" stroke-width="0.8"/>
<line x1="323.4" y1="232.96" x2="792.3" y2="232.96" stroke="#000" stroke-opacity="0.3" stroke-width="0.8"/>
<line x1="323.4" y1="244.12" x2="792.3" y2="244.12" stroke="#000" stroke-opacity="0.3" stroke-width="0.8"/>
<line x1="323.4" y1="255.28" x2="792.3" y2="255.28" stroke="#000" stroke-opacity="0.3" stroke-width="0.8"/>
<line x1="323.4" y1="266.45" x2="792.3" y2="266.45" stroke="#000" stroke-opacity="0.3" stroke-width="0.8"/>
<line x1="323.4" y1="277.61" x2="792.3" y2="277.61" stroke="#000" stroke-opacity="0.3" stroke-width="0.8"/>
<line x1="323.4" y1="288.77" x2="792.3" y2="288.77" stroke="#000" stroke-opacity="0.3" stroke-width="0.8"/>
<line x1="323.4" y1="299.94" x2="792.3" y2="299.94" stroke="#000" stroke-opacity="0.3" stroke-width="0.8"/>
<line x1="323.4" y1="311.10" x2="792.3" y2="311.10" stroke="#000" stroke-opacity="0.3" stroke-width="0.8"/>
<line x1="323.4" y1="322.26" x2="792.3" y2="322.26" stroke="#000" stroke-opacity="0.3" stroke-width="0.8"/>
<line x1="323.4" y1="333.43" x2="792.3" y2="333.43" stroke="#000" stroke-opacity="0.3" stroke-width="0.8"/>
<line x1="323.4" y1="344.59" x2="792.3" y2="344.59" stroke="#000" stroke-opacity="0.3" stroke-width="0.8"/>
<line x1="323.4" y1="355.75" x2="792.3" y2="355.75" stroke="#000" stroke-opacity="0.3" stroke-width="0.8"/>
<line x1="323.4" y1="366.91" x2="792.3" y2="366.91" stroke="#000" stroke-opacity="0.3" stroke-width="0.8"/>
<line x1="323.4" y1="378.08" x2="792.3" y2="378.08" stroke="#000" stroke-opacity="0.3" stroke-width="0.8"/>
<line x1="323.4" y1="389.24" x2="792.3" y2="389.24" stroke="#000" stroke-opacity="0.3" stroke-width="0.8"/>
<line x1="323.4" y1="400.40" x2="792.3" y2="400.40" stroke="#000" stroke-opacity="0.3" stroke-width="0.8"/>
<line x1="323.4" y1="411.57" x2="792.3" y2="411.57" stroke="#000" stroke-opacity="0.3" stroke-width="0.8"/>
<line x1="323.4" y1="422.73" x2="792.3" y2="422.73" stroke="#000" stroke-opacity="0.3" stroke-width="0.8"/>
<line x1="323.4" y1="433.89" x2="792.3" y2="433.89" stroke="#000" stroke-opacity="0.3" stroke-width="0.8"/>
<line x1="323.4" y1="445.06" x2="792.3" y2="445.06" stroke="#000" stroke-opacity="0.3" stroke-width="0.8"/>
<line x1="323.4" y1="456.22" x2="792.3" y2="456.22" stroke="#000" stroke-opacity="0.3" stroke-width="0.8"/>
<line x1="323.4" y1="467.38" x2="792.3" y2="467.38" stroke="#000" stroke-opacity="0.3" stroke-width="0.8"/>
<line x1="323.4" y1="478.54" x2="792.3" y2="478.54" stroke="#000" stroke-opacity="0.3" stroke-width="0.8"/>
<line x1="323.4" y1="489.71" x2="792.3" y2="489.71" stroke="#000" stroke-opacity="0.3" stroke-width="0.8"/>
<line x1="323.4" y1="500.87" x2="792.3" y2="500.87" stroke="#000" stroke-opacity="0.3" stroke-width="0.8"/>
<line x1="323.4" y1="512.03" x2="792.3" y2="512.03" stroke="#000" stroke-opacity="0.3" stroke-width="0.8"/>
<line x1="323.4" y1="523.20" x2="792.3" y2="523.20" stroke="#000" stroke-opacity="0.3" stroke-width="0.8"/>
<line x1="323.4" y1="534.36" x2="792.3" y2="534.36" stroke="#000" stroke-opacity="0.3" stroke-width="0.8"/>
<line x1="323.4" y1="545.52" x2="792.3" y2="545.52" stroke="#000" stroke-opacity="0.3" stroke-width="0.8"/>
<line x1="323.4" y1="556.69" x2="792.3" y2="556.69" stroke="#000" stroke-opacity="0.3" stroke-width="0.8"/>
<line x1="323.4" y1="567.85" x2="792.3" y2="567.85" stroke="#000" stroke-opacity="0.3" stroke-width="0.8"/>
<line x1="323.4" y1="579.01" x2="792.3" y2="579.01" stroke="#000" stroke-opacity="0.3" stroke-width="0.8"/>
<line x1="323.4" y1="590.17" x2="792.3" y2="590.17" stroke="#000" stroke-opacity="0.3" stroke-width="0.8"/>
<line x1="323.4" y1="601.34" x2="792.3" y2="601.34" stroke="#000" stroke-opacity="0.3" stroke-width="0.8"/>
<g fill="#000">
<text x="386.9" y="19.2" xml:space="preserve"><tspan fill="#a4a4a4" stroke="#a4a4a4" stroke-width="0.45">==</tspan><tspan fill="#000">Channel</tspan><tspan fill="#a4a4a4" stroke="#a4a4a4" stroke-width="0.45">==</tspan></text>
<text x="508" y="19.2" xml:space="preserve"><tspan fill="#a4a4a4" stroke="#a4a4a4" stroke-width="0.45">========</tspan><tspan fill="#000">Signal</tspan><tspan fill="#a4a4a4" stroke="#a4a4a4" stroke-width="0.45">========</tspan></text>
<text x="675.9" y="19.2" xml:space="preserve"><tspan fill="#000">Dist</tspan></text>
<text x="717.1" y="19.2" xml:space="preserve"><tspan fill="#a4a4a4" stroke="#a4a4a4" stroke-width="0.45">==</tspan><tspan fill="#000">Azimuth</tspan><tspan fill="#a4a4a4" stroke="#a4a4a4" stroke-width="0.45">==</tspan></text>
<text x="325.9" y="29" text-anchor="start">Callsign</text>
<text x="412.6" y="29" text-anchor="end">Real</text>
<text x="460.8" y="29" text-anchor="end">(Virt)</text>
<text x="467.7" y="29" text-anchor="start">Netwk</text>
<text x="514.9" y="29" text-anchor="start">NM(dB)</text>
<text x="561.7" y="29" text-anchor="start">Pwr(dBm)</text>
<text x="629.4" y="29" text-anchor="start">Path</text>
<text x="669.9" y="29" text-anchor="start">miles</text>
<text x="716.6" y="29" text-anchor="start">True</text>
<text x="791.5" y="29" text-anchor="end">(Magn)</text>
</g>
<rect x="325.8" y="29.9" width="465.4" height="1.1" fill="#111"/>
<g fill="#7a0acc"><text transform="translate(325.90 41.10) scale(1.1 1)" text-anchor="start"><tspan font-size="9.9" letter-spacing="0.067">K</tspan><tspan font-size="10.8" letter-spacing="-0.474">38</tspan><tspan font-size="9.9" letter-spacing="0.067">HE</tspan></text><text x="413.5" y="41.10" text-anchor="end">38</text><text x="548.6" y="41.10" text-anchor="end">43.5</text><text x="608.0" y="41.10" text-anchor="end">-35.4</text><text transform="translate(639.60 41.10) scale(1.1 1)" text-anchor="middle"><tspan font-size="9.9" letter-spacing="0.067">LOS</tspan></text><text x="703.1" y="41.10" text-anchor="end">7.6</text><text x="743.6" y="41.10" text-anchor="end" fill="#d71e37">347°</text><text x="791.5" y="41.10" text-anchor="end" fill="#d71e37">(347°)</text></g>
<g fill="#0a58d6"><text transform="translate(325.90 53.00) scale(1.1 1)" text-anchor="start"><tspan font-size="9.9" letter-spacing="0.067">KAIT</tspan></text><text x="413.5" y="53.00" text-anchor="end">8</text><text x="460.8" y="53.00" text-anchor="end">(8.1)</text><text transform="translate(494.60 53.00) scale(1.1 1)" text-anchor="end"><tspan font-size="9.9" letter-spacing="0.067">ABC</tspan></text><text x="548.6" y="53.00" text-anchor="end">17.3</text><text x="608.0" y="53.00" text-anchor="end">-73.6</text><text transform="translate(639.60 53.00) scale(1.1 1)" text-anchor="middle"><tspan font-size="10.8" letter-spacing="-0.474">1</tspan><tspan font-size="9.9" letter-spacing="0.067">Edge</tspan></text><text x="703.1" y="53.00" text-anchor="end">72.3</text><text x="743.6" y="53.00" text-anchor="end" fill="#198735">136°</text><text x="791.5" y="53.00" text-anchor="end" fill="#198735">(135°)</text></g>
<g fill="#0a58d6"><text transform="translate(325.90 64.16) scale(1.1 1)" text-anchor="start"><tspan font-size="9.9" letter-spacing="0.067">KEMV</tspan></text><text x="413.5" y="64.16" text-anchor="end">13</text><text x="460.8" y="64.16" text-anchor="end">(6.1)</text><text transform="translate(494.60 64.16) scale(1.1 1)" text-anchor="end"><tspan font-size="9.9" letter-spacing="0.067">PBS</tspan></text><text x="548.6" y="64.16" text-anchor="end">13.4</text><text x="608.0" y="64.16" text-anchor="end">-77.5</text><text transform="translate(639.60 64.16) scale(1.1 1)" text-anchor="middle"><tspan font-size="10.8" letter-spacing="-0.474">1</tspan><tspan font-size="9.9" letter-spacing="0.067">Edge</tspan></text><text x="703.1" y="64.16" text-anchor="end">62.7</text><text x="743.6" y="64.16" text-anchor="end" fill="#1e6ec8">204°</text><text x="791.5" y="64.16" text-anchor="end" fill="#1e6ec8">(204°)</text></g>
<g fill="#0a58d6"><text transform="translate(325.90 75.33) scale(1.1 1)" text-anchor="start"><tspan font-size="9.9" letter-spacing="0.067">KSPR-DT</tspan></text><text x="413.5" y="75.33" text-anchor="end">19</text><text transform="translate(494.60 75.33) scale(1.1 1)" text-anchor="end"><tspan font-size="9.9" letter-spacing="0.067">ABC</tspan></text><text x="548.6" y="75.33" text-anchor="end">12.7</text><text x="608.0" y="75.33" text-anchor="end">-78.2</text><text transform="translate(639.60 75.33) scale(1.1 1)" text-anchor="middle"><tspan font-size="10.8" letter-spacing="-0.474">2</tspan><tspan font-size="9.9" letter-spacing="0.067">Edge</tspan></text><text x="703.1" y="75.33" text-anchor="end">71.4</text><text x="743.6" y="75.33" text-anchor="end" fill="#cd1eb9">301°</text><text x="791.5" y="75.33" text-anchor="end" fill="#cd1eb9">(301°)</text></g>
<g fill="#0a58d6"><text transform="translate(325.90 86.49) scale(1.1 1)" text-anchor="start"><tspan font-size="9.9" letter-spacing="0.067">KYTV</tspan></text><text x="413.5" y="86.49" text-anchor="end">44</text><text x="460.8" y="86.49" text-anchor="end">(3.1)</text><text transform="translate(494.60 86.49) scale(1.1 1)" text-anchor="end"><tspan font-size="9.9" letter-spacing="0.067">NBC</tspan></text><text x="548.6" y="86.49" text-anchor="end">10.4</text><text x="608.0" y="86.49" text-anchor="end">-80.4</text><text transform="translate(639.60 86.49) scale(1.1 1)" text-anchor="middle"><tspan font-size="10.8" letter-spacing="-0.474">2</tspan><tspan font-size="9.9" letter-spacing="0.067">Edge</tspan></text><text x="703.1" y="86.49" text-anchor="end">71.4</text><text x="743.6" y="86.49" text-anchor="end" fill="#cd1eb9">301°</text><text x="791.5" y="86.49" text-anchor="end" fill="#cd1eb9">(301°)</text></g>
<g fill="#0a58d6"><text transform="translate(325.90 97.65) scale(1.1 1)" text-anchor="start"><tspan font-size="9.9" letter-spacing="0.067">KOZL-TV</tspan></text><text x="413.5" y="97.65" text-anchor="end">28</text><text x="460.8" y="97.65" text-anchor="end">(27.1)</text><text x="548.6" y="97.65" text-anchor="end">8.2</text><text x="608.0" y="97.65" text-anchor="end">-82.6</text><text transform="translate(639.60 97.65) scale(1.1 1)" text-anchor="middle"><tspan font-size="10.8" letter-spacing="-0.474">1</tspan><tspan font-size="9.9" letter-spacing="0.067">Edge</tspan></text><text x="703.1" y="97.65" text-anchor="end">73.4</text><text x="743.6" y="97.65" text-anchor="end" fill="#ce1eb3">303°</text><text x="791.5" y="97.65" text-anchor="end" fill="#ce1eb3">(303°)</text></g>
<rect x="313.1" y="87.99" width="6.9" height="10.96" fill="#c40000"/><text x="316.6" y="97.35" text-anchor="middle" fill="#fff">C</text>
<g fill="#0a58d6"><text transform="translate(325.90 108.81) scale(1.1 1)" text-anchor="start"><tspan font-size="9.9" letter-spacing="0.067">KOLR</tspan></text><text x="413.5" y="108.81" text-anchor="end">10</text><text x="460.8" y="108.81" text-anchor="end">(10.1)</text><text transform="translate(494.60 108.81) scale(1.1 1)" text-anchor="end"><tspan font-size="9.9" letter-spacing="0.067">CBS</tspan></text><text x="548.6" y="108.81" text-anchor="end">7.7</text><text x="608.0" y="108.81" text-anchor="end">-83.1</text><text transform="translate(639.60 108.81) scale(1.1 1)" text-anchor="middle"><tspan font-size="10.8" letter-spacing="-0.474">1</tspan><tspan font-size="9.9" letter-spacing="0.067">Edge</tspan></text><text x="703.1" y="108.81" text-anchor="end">73.4</text><text x="743.6" y="108.81" text-anchor="end" fill="#ce1eb3">303°</text><text x="791.5" y="108.81" text-anchor="end" fill="#ce1eb3">(303°)</text></g>
<g fill="#0a58d6"><text transform="translate(325.90 119.98) scale(1.1 1)" text-anchor="start"><tspan font-size="9.9" letter-spacing="0.067">KOZK-DT</tspan></text><text x="413.5" y="119.98" text-anchor="end">23</text><text x="460.8" y="119.98" text-anchor="end">(21.1)</text><text transform="translate(494.60 119.98) scale(1.1 1)" text-anchor="end"><tspan font-size="9.9" letter-spacing="0.067">PBS</tspan></text><text x="548.6" y="119.98" text-anchor="end">3.1</text><text x="608.0" y="119.98" text-anchor="end">-87.8</text><text transform="translate(639.60 119.98) scale(1.1 1)" text-anchor="middle"><tspan font-size="10.8" letter-spacing="-0.474">2</tspan><tspan font-size="9.9" letter-spacing="0.067">Edge</tspan></text><text x="703.1" y="119.98" text-anchor="end">71.3</text><text x="743.6" y="119.98" text-anchor="end" fill="#cd1eb9">301°</text><text x="791.5" y="119.98" text-anchor="end" fill="#cd1eb9">(301°)</text></g>
<rect x="313.1" y="110.31" width="6.9" height="10.96" fill="#c40000"/><text x="316.6" y="119.68" text-anchor="middle" fill="#fff">C</text>
<g fill="#0a58d6"><text transform="translate(325.90 131.14) scale(1.1 1)" text-anchor="start"><tspan font-size="9.9" letter-spacing="0.067">KTEJ</tspan></text><text x="413.5" y="131.14" text-anchor="end">20</text><text transform="translate(494.60 131.14) scale(1.1 1)" text-anchor="end"><tspan font-size="9.9" letter-spacing="0.067">PBS</tspan></text><text x="548.6" y="131.14" text-anchor="end">2.5</text><text x="608.0" y="131.14" text-anchor="end">-88.4</text><text transform="translate(639.60 131.14) scale(1.1 1)" text-anchor="middle"><tspan font-size="10.8" letter-spacing="-0.474">2</tspan><tspan font-size="9.9" letter-spacing="0.067">Edge</tspan></text><text x="703.1" y="131.14" text-anchor="end">78.3</text><text x="743.6" y="131.14" text-anchor="end" fill="#1b892f">130°</text><text x="791.5" y="131.14" text-anchor="end" fill="#1b892f">(130°)</text></g>
<rect x="313.1" y="121.48" width="6.9" height="10.96" fill="#c40000"/><text x="316.6" y="130.84" text-anchor="middle" fill="#fff">C</text>
<g fill="#0a58d6"><text transform="translate(325.90 142.30) scale(1.1 1)" text-anchor="start"><tspan font-size="9.9" letter-spacing="0.067">K</tspan><tspan font-size="10.8" letter-spacing="-0.474">07</tspan><tspan font-size="9.9" letter-spacing="0.067">XL-D</tspan></text><text x="413.5" y="142.30" text-anchor="end">7</text><text x="548.6" y="142.30" text-anchor="end">-0.6</text><text x="608.0" y="142.30" text-anchor="end">-91.5</text><text transform="translate(639.60 142.30) scale(1.1 1)" text-anchor="middle"><tspan font-size="10.8" letter-spacing="-0.474">2</tspan><tspan font-size="9.9" letter-spacing="0.067">Edge</tspan></text><text x="703.1" y="142.30" text-anchor="end">37.6</text><text x="743.6" y="142.30" text-anchor="end" fill="#1e1eaa">238°</text><text x="791.5" y="142.30" text-anchor="end" fill="#1e1eaa">(237°)</text></g>
<rect x="313.1" y="132.64" width="6.9" height="10.96" fill="#c40000"/><text x="316.6" y="142.00" text-anchor="middle" fill="#fff">C</text>
<g fill="#0a58d6"><text transform="translate(325.90 153.47) scale(1.1 1)" text-anchor="start"><tspan font-size="9.9" letter-spacing="0.067">K</tspan><tspan font-size="10.8" letter-spacing="-0.474">26</tspan><tspan font-size="9.9" letter-spacing="0.067">GS-D</tspan></text><text x="413.5" y="153.47" text-anchor="end">26</text><text x="548.6" y="153.47" text-anchor="end">-3.7</text><text x="608.0" y="153.47" text-anchor="end">-94.5</text><text transform="translate(639.60 153.47) scale(1.1 1)" text-anchor="middle"><tspan font-size="10.8" letter-spacing="-0.474">2</tspan><tspan font-size="9.9" letter-spacing="0.067">Edge</tspan></text><text x="703.1" y="153.47" text-anchor="end">76.2</text><text x="743.6" y="153.47" text-anchor="end" fill="#251eac">242°</text><text x="791.5" y="153.47" text-anchor="end" fill="#251eac">(241°)</text></g>
<g fill="#7a0acc"><text transform="translate(325.90 164.63) scale(1.1 1)" text-anchor="start"><tspan font-size="9.9" letter-spacing="0.067">K</tspan><tspan font-size="10.8" letter-spacing="-0.474">41</tspan><tspan font-size="9.9" letter-spacing="0.067">HC</tspan></text><text x="413.5" y="164.63" text-anchor="end">41</text><text x="548.6" y="164.63" text-anchor="end">-7.3</text><text x="608.0" y="164.63" text-anchor="end">-86.1</text><text transform="translate(639.60 164.63) scale(1.1 1)" text-anchor="middle"><tspan font-size="10.8" letter-spacing="-0.474">2</tspan><tspan font-size="9.9" letter-spacing="0.067">Edge</tspan></text><text x="703.1" y="164.63" text-anchor="end">37.5</text><text x="743.6" y="164.63" text-anchor="end" fill="#1e20ab">237°</text><text x="791.5" y="164.63" text-anchor="end" fill="#1e20ab">(237°)</text></g>
<g fill="#0a58d6"><text transform="translate(325.90 175.79) scale(1.1 1)" text-anchor="start"><tspan font-size="9.9" letter-spacing="0.067">WMC-DT</tspan></text><text x="413.5" y="175.79" text-anchor="end">5</text><text x="460.8" y="175.79" text-anchor="end">(5.1)</text><text transform="translate(494.60 175.79) scale(1.1 1)" text-anchor="end"><tspan font-size="9.9" letter-spacing="0.067">NBC</tspan></text><text x="548.6" y="175.79" text-anchor="end">-11.2</text><text x="608.0" y="175.79" text-anchor="end">-102.1</text><text transform="translate(639.60 175.79) scale(1.1 1)" text-anchor="middle"><tspan font-size="9.9" letter-spacing="0.067">Tropo</tspan></text><text x="703.1" y="175.79" text-anchor="end">149.2</text><text x="743.6" y="175.79" text-anchor="end" fill="#1a8830">132°</text><text x="791.5" y="175.79" text-anchor="end" fill="#1a8830">(132°)</text></g>
<g fill="#0a58d6"><text transform="translate(325.90 186.96) scale(1.1 1)" text-anchor="start"><tspan font-size="9.9" letter-spacing="0.067">KWBM</tspan></text><text x="413.5" y="186.96" text-anchor="end">31</text><text transform="translate(494.60 186.96) scale(1.1 1)" text-anchor="end"><tspan font-size="9.9" letter-spacing="0.067">MyN</tspan></text><text x="548.6" y="186.96" text-anchor="end">-12.0</text><text x="608.0" y="186.96" text-anchor="end">-102.8</text><text transform="translate(639.60 186.96) scale(1.1 1)" text-anchor="middle"><tspan font-size="10.8" letter-spacing="-0.474">2</tspan><tspan font-size="9.9" letter-spacing="0.067">Edge</tspan></text><text x="703.1" y="186.96" text-anchor="end">68.4</text><text x="743.6" y="186.96" text-anchor="end" fill="#7c1eb7">274°</text><text x="791.5" y="186.96" text-anchor="end" fill="#7c1eb7">(274°)</text></g>
<rect x="313.1" y="177.29" width="6.9" height="10.96" fill="#c40000"/><text x="316.6" y="186.66" text-anchor="middle" fill="#fff">C</text>
<g fill="#0a58d6"><text transform="translate(325.90 198.12) scale(1.1 1)" text-anchor="start"><tspan font-size="9.9" letter-spacing="0.067">KVTJ</tspan></text><text x="413.5" y="198.12" text-anchor="end">48</text><text x="460.8" y="198.12" text-anchor="end">(48.1)</text><text transform="translate(494.60 198.12) scale(1.1 1)" text-anchor="end"><tspan font-size="9.9" letter-spacing="0.067">Ind</tspan></text><text x="548.6" y="198.12" text-anchor="end">-13.5</text><text x="608.0" y="198.12" text-anchor="end">-104.4</text><text transform="translate(639.60 198.12) scale(1.1 1)" text-anchor="middle"><tspan font-size="9.9" letter-spacing="0.067">Tropo</tspan></text><text x="703.1" y="198.12" text-anchor="end">102.6</text><text x="743.6" y="198.12" text-anchor="end" fill="#198731">134°</text><text x="791.5" y="198.12" text-anchor="end" fill="#198731">(134°)</text></g>
<rect x="313.1" y="188.46" width="6.9" height="10.96" fill="#c40000"/><text x="316.6" y="197.82" text-anchor="middle" fill="#fff">C</text>
<g fill="#7a0acc"><text transform="translate(325.90 209.28) scale(1.1 1)" text-anchor="start"><tspan font-size="9.9" letter-spacing="0.067">K</tspan><tspan font-size="10.8" letter-spacing="-0.474">15</tspan><tspan font-size="9.9" letter-spacing="0.067">FW</tspan></text><text x="413.5" y="209.28" text-anchor="end">15</text><text x="548.6" y="209.28" text-anchor="end">-16.5</text><text x="608.0" y="209.28" text-anchor="end">-95.3</text><text transform="translate(639.60 209.28) scale(1.1 1)" text-anchor="middle"><tspan font-size="10.8" letter-spacing="-0.474">2</tspan><tspan font-size="9.9" letter-spacing="0.067">Edge</tspan></text><text x="703.1" y="209.28" text-anchor="end">52.2</text><text x="743.6" y="209.28" text-anchor="end" fill="#1e8caa">174°</text><text x="791.5" y="209.28" text-anchor="end" fill="#1e8caa">(173°)</text></g>
<rect x="313.1" y="199.62" width="6.9" height="10.96" fill="#c40000"/><text x="316.6" y="208.98" text-anchor="middle" fill="#fff">C</text>
<g fill="#0a58d6"><text transform="translate(325.90 220.44) scale(1.1 1)" text-anchor="start"><tspan font-size="9.9" letter-spacing="0.067">WPTY-DT</tspan></text><text x="413.5" y="220.44" text-anchor="end">25</text><text x="460.8" y="220.44" text-anchor="end">(24.1)</text><text transform="translate(494.60 220.44) scale(1.1 1)" text-anchor="end"><tspan font-size="9.9" letter-spacing="0.067">ABC</tspan></text><text x="548.6" y="220.44" text-anchor="end">-17.9</text><text x="608.0" y="220.44" text-anchor="end">-108.7</text><text transform="translate(639.60 220.44) scale(1.1 1)" text-anchor="middle"><tspan font-size="9.9" letter-spacing="0.067">Tropo</tspan></text><text x="703.1" y="220.44" text-anchor="end">148.9</text><text x="743.6" y="220.44" text-anchor="end" fill="#1b892e">129°</text><text x="791.5" y="220.44" text-anchor="end" fill="#1b892e">(128°)</text></g>
<rect x="313.1" y="210.78" width="6.9" height="10.96" fill="#c40000"/><text x="316.6" y="220.14" text-anchor="middle" fill="#fff">C</text>
<g fill="#0a58d6"><text transform="translate(325.90 231.61) scale(1.1 1)" text-anchor="start"><tspan font-size="9.9" letter-spacing="0.067">K</tspan><tspan font-size="10.8" letter-spacing="-0.474">41</tspan><tspan font-size="9.9" letter-spacing="0.067">HC</tspan></text><text x="413.5" y="231.61" text-anchor="end">41</text><text x="460.8" y="231.61" text-anchor="end">(41.1)</text><text x="548.6" y="231.61" text-anchor="end">-18.0</text><text x="608.0" y="231.61" text-anchor="end">-108.9</text><text transform="translate(639.60 231.61) scale(1.1 1)" text-anchor="middle"><tspan font-size="10.8" letter-spacing="-0.474">2</tspan><tspan font-size="9.9" letter-spacing="0.067">Edge</tspan></text><text x="703.1" y="231.61" text-anchor="end">35.1</text><text x="743.6" y="231.61" text-anchor="end" fill="#8c1eb9">279°</text><text x="791.5" y="231.61" text-anchor="end" fill="#8c1eb9">(279°)</text></g>
<rect x="313.1" y="221.94" width="6.9" height="10.96" fill="#c40000"/><text x="316.6" y="231.31" text-anchor="middle" fill="#fff">C</text>
<g fill="#0a58d6"><text transform="translate(325.90 242.77) scale(1.1 1)" text-anchor="start"><tspan font-size="9.9" letter-spacing="0.067">WTWV-DT</tspan></text><text x="413.5" y="242.77" text-anchor="end">23</text><text x="460.8" y="242.77" text-anchor="end">(14.1)</text><text x="548.6" y="242.77" text-anchor="end">-18.2</text><text x="608.0" y="242.77" text-anchor="end">-109.1</text><text transform="translate(639.60 242.77) scale(1.1 1)" text-anchor="middle"><tspan font-size="9.9" letter-spacing="0.067">Tropo</tspan></text><text x="703.1" y="242.77" text-anchor="end">150.2</text><text x="743.6" y="242.77" text-anchor="end" fill="#1a882f">131°</text><text x="791.5" y="242.77" text-anchor="end" fill="#1a882f">(130°)</text></g>
<rect x="313.1" y="233.11" width="6.9" height="10.96" fill="#c40000"/><text x="316.6" y="242.47" text-anchor="middle" fill="#fff">C</text>
<g fill="#0a58d6"><text transform="translate(325.90 253.93) scale(1.1 1)" text-anchor="start"><tspan font-size="9.9" letter-spacing="0.067">WREG-DT</tspan></text><text x="413.5" y="253.93" text-anchor="end">28</text><text x="460.8" y="253.93" text-anchor="end">(3.1)</text><text transform="translate(494.60 253.93) scale(1.1 1)" text-anchor="end"><tspan font-size="9.9" letter-spacing="0.067">CBS</tspan></text><text x="548.6" y="253.93" text-anchor="end">-18.7</text><text x="608.0" y="253.93" text-anchor="end">-109.5</text><text transform="translate(639.60 253.93) scale(1.1 1)" text-anchor="middle"><tspan font-size="9.9" letter-spacing="0.067">Tropo</tspan></text><text x="703.1" y="253.93" text-anchor="end">150.9</text><text x="743.6" y="253.93" text-anchor="end" fill="#1a882f">131°</text><text x="791.5" y="253.93" text-anchor="end" fill="#1a882f">(131°)</text></g>
<rect x="306.2" y="244.27" width="6.9" height="10.96" fill="#ff8686"/><text x="309.6" y="253.63" text-anchor="middle" fill="#fff">a</text>
<rect x="313.1" y="244.27" width="6.9" height="10.96" fill="#c40000"/><text x="316.6" y="253.63" text-anchor="middle" fill="#fff">C</text>
<g fill="#0a58d6"><text transform="translate(325.90 265.10) scale(1.1 1)" text-anchor="start"><tspan font-size="9.9" letter-spacing="0.067">WKNO-DT</tspan></text><text x="413.5" y="265.10" text-anchor="end">29</text><text x="460.8" y="265.10" text-anchor="end">(10.1)</text><text transform="translate(494.60 265.10) scale(1.1 1)" text-anchor="end"><tspan font-size="9.9" letter-spacing="0.067">PBS</tspan></text><text x="548.6" y="265.10" text-anchor="end">-18.9</text><text x="608.0" y="265.10" text-anchor="end">-109.7</text><text transform="translate(639.60 265.10) scale(1.1 1)" text-anchor="middle"><tspan font-size="9.9" letter-spacing="0.067">Tropo</tspan></text><text x="703.1" y="265.10" text-anchor="end">152.6</text><text x="743.6" y="265.10" text-anchor="end" fill="#1a8830">132°</text><text x="791.5" y="265.10" text-anchor="end" fill="#1a8830">(131°)</text></g>
<rect x="306.2" y="255.43" width="6.9" height="10.96" fill="#ff8686"/><text x="309.6" y="264.80" text-anchor="middle" fill="#fff">a</text>
<g fill="#0a58d6"><text transform="translate(325.90 276.26) scale(1.1 1)" text-anchor="start"><tspan font-size="9.9" letter-spacing="0.067">WLMT-DT</tspan></text><text x="413.5" y="276.26" text-anchor="end">31</text><text x="460.8" y="276.26" text-anchor="end">(30.1)</text><text transform="translate(494.60 276.26) scale(1.1 1)" text-anchor="end"><tspan font-size="9.9" letter-spacing="0.067">CW</tspan></text><text x="548.6" y="276.26" text-anchor="end">-19.1</text><text x="608.0" y="276.26" text-anchor="end">-109.9</text><text transform="translate(639.60 276.26) scale(1.1 1)" text-anchor="middle"><tspan font-size="9.9" letter-spacing="0.067">Tropo</tspan></text><text x="703.1" y="276.26" text-anchor="end">148.9</text><text x="743.6" y="276.26" text-anchor="end" fill="#1b892e">129°</text><text x="791.5" y="276.26" text-anchor="end" fill="#1b892e">(128°)</text></g>
<rect x="313.1" y="266.60" width="6.9" height="10.96" fill="#c40000"/><text x="316.6" y="275.96" text-anchor="middle" fill="#fff">C</text>
<g fill="#0a58d6"><text transform="translate(325.90 287.42) scale(1.1 1)" text-anchor="start"><tspan font-size="9.9" letter-spacing="0.067">KARK-DT</tspan></text><text x="413.5" y="287.42" text-anchor="end">32</text><text x="460.8" y="287.42" text-anchor="end">(4.1)</text><text transform="translate(494.60 287.42) scale(1.1 1)" text-anchor="end"><tspan font-size="9.9" letter-spacing="0.067">NBC</tspan></text><text x="548.6" y="287.42" text-anchor="end">-19.3</text><text x="608.0" y="287.42" text-anchor="end">-110.1</text><text transform="translate(639.60 287.42) scale(1.1 1)" text-anchor="middle"><tspan font-size="9.9" letter-spacing="0.067">Tropo</tspan></text><text x="703.1" y="287.42" text-anchor="end">132.5</text><text x="743.6" y="287.42" text-anchor="end" fill="#1e77bf">197°</text><text x="791.5" y="287.42" text-anchor="end" fill="#1e77bf">(196°)</text></g>
<rect x="313.1" y="277.76" width="6.9" height="10.96" fill="#c40000"/><text x="316.6" y="287.12" text-anchor="middle" fill="#fff">C</text>
<g fill="#0a58d6"><text transform="translate(325.90 298.59) scale(1.1 1)" text-anchor="start"><tspan font-size="9.9" letter-spacing="0.067">WPXX-DT</tspan></text><text x="413.5" y="298.59" text-anchor="end">51</text><text x="460.8" y="298.59" text-anchor="end">(50.1)</text><text transform="translate(494.60 298.59) scale(1.1 1)" text-anchor="end"><tspan font-size="9.9" letter-spacing="0.067">MyN</tspan></text><text x="548.6" y="298.59" text-anchor="end">-20.0</text><text x="608.0" y="298.59" text-anchor="end">-110.8</text><text transform="translate(639.60 298.59) scale(1.1 1)" text-anchor="middle"><tspan font-size="9.9" letter-spacing="0.067">Tropo</tspan></text><text x="703.1" y="298.59" text-anchor="end">150.2</text><text x="743.6" y="298.59" text-anchor="end" fill="#1b892f">130°</text><text x="791.5" y="298.59" text-anchor="end" fill="#1b892f">(130°)</text></g>
<g fill="#0a58d6"><text transform="translate(325.90 309.75) scale(1.1 1)" text-anchor="start"><tspan font-size="9.9" letter-spacing="0.067">KTHV-DT</tspan></text><text x="413.5" y="309.75" text-anchor="end">12</text><text x="460.8" y="309.75" text-anchor="end">(11.1)</text><text transform="translate(494.60 309.75) scale(1.1 1)" text-anchor="end"><tspan font-size="9.9" letter-spacing="0.067">CBS</tspan></text><text x="548.6" y="309.75" text-anchor="end">-20.2</text><text x="608.0" y="309.75" text-anchor="end">-111.0</text><text transform="translate(639.60 309.75) scale(1.1 1)" text-anchor="middle"><tspan font-size="9.9" letter-spacing="0.067">Tropo</tspan></text><text x="703.1" y="309.75" text-anchor="end">132.5</text><text x="743.6" y="309.75" text-anchor="end" fill="#1e77bf">197°</text><text x="791.5" y="309.75" text-anchor="end" fill="#1e77bf">(196°)</text></g>
<rect x="306.2" y="300.09" width="6.9" height="10.96" fill="#ff8686"/><text x="309.6" y="309.45" text-anchor="middle" fill="#fff">a</text>
<rect x="313.1" y="300.09" width="6.9" height="10.96" fill="#c40000"/><text x="316.6" y="309.45" text-anchor="middle" fill="#fff">C</text>
<g fill="#0a58d6"><text transform="translate(325.90 320.91) scale(1.1 1)" text-anchor="start"><tspan font-size="9.9" letter-spacing="0.067">KNLC-DT</tspan></text><text x="413.5" y="320.91" text-anchor="end">14</text><text x="460.8" y="320.91" text-anchor="end">(24.1)</text><text transform="translate(494.60 320.91) scale(1.1 1)" text-anchor="end"><tspan font-size="9.9" letter-spacing="0.067">Ind</tspan></text><text x="548.6" y="320.91" text-anchor="end">-20.6</text><text x="608.0" y="320.91" text-anchor="end">-111.4</text><text transform="translate(639.60 320.91) scale(1.1 1)" text-anchor="middle"><tspan font-size="9.9" letter-spacing="0.067">Tropo</tspan></text><text x="703.1" y="320.91" text-anchor="end">137.9</text><text x="743.6" y="320.91" text-anchor="end" fill="#de6e28">30°</text><text x="791.5" y="320.91" text-anchor="end" fill="#de6e28">(30°)</text></g>
<rect x="313.1" y="311.25" width="6.9" height="10.96" fill="#c40000"/><text x="316.6" y="320.61" text-anchor="middle" fill="#fff">C</text>
<g fill="#0a58d6"><text transform="translate(325.90 332.07) scale(1.1 1)" text-anchor="start"><tspan font-size="9.9" letter-spacing="0.067">KARZ-DT</tspan></text><text x="413.5" y="332.07" text-anchor="end">44</text><text x="460.8" y="332.07" text-anchor="end">(42.1)</text><text x="548.6" y="332.07" text-anchor="end">-20.8</text><text x="608.0" y="332.07" text-anchor="end">-111.6</text><text transform="translate(639.60 332.07) scale(1.1 1)" text-anchor="middle"><tspan font-size="9.9" letter-spacing="0.067">Tropo</tspan></text><text x="703.1" y="332.07" text-anchor="end">132.5</text><text x="743.6" y="332.07" text-anchor="end" fill="#1e77bf">197°</text><text x="791.5" y="332.07" text-anchor="end" fill="#1e77bf">(196°)</text></g>
<rect x="306.2" y="322.41" width="6.9" height="10.96" fill="#ff8686"/><text x="309.6" y="331.77" text-anchor="middle" fill="#fff">a</text>
<rect x="313.1" y="322.41" width="6.9" height="10.96" fill="#c40000"/><text x="316.6" y="331.77" text-anchor="middle" fill="#fff">C</text>
<g fill="#0a58d6"><text transform="translate(325.90 343.24) scale(1.1 1)" text-anchor="start"><tspan font-size="9.9" letter-spacing="0.067">KNLJ</tspan></text><text x="413.5" y="343.24" text-anchor="end">20</text><text x="460.8" y="343.24" text-anchor="end">(25.1)</text><text transform="translate(494.60 343.24) scale(1.1 1)" text-anchor="end"><tspan font-size="9.9" letter-spacing="0.067">Ind</tspan></text><text x="548.6" y="343.24" text-anchor="end">-21.8</text><text x="608.0" y="343.24" text-anchor="end">-112.7</text><text transform="translate(639.60 343.24) scale(1.1 1)" text-anchor="middle"><tspan font-size="9.9" letter-spacing="0.067">Tropo</tspan></text><text x="703.1" y="343.24" text-anchor="end">142.8</text><text x="743.6" y="343.24" text-anchor="end" fill="#d71e2f">354°</text><text x="791.5" y="343.24" text-anchor="end" fill="#d71e2f">(354°)</text></g>
<rect x="306.2" y="333.57" width="6.9" height="10.96" fill="#ff8686"/><text x="309.6" y="342.94" text-anchor="middle" fill="#fff">a</text>
<rect x="313.1" y="333.57" width="6.9" height="10.96" fill="#c40000"/><text x="316.6" y="342.94" text-anchor="middle" fill="#fff">C</text>
<g fill="#0a58d6"><text transform="translate(325.90 354.40) scale(1.1 1)" text-anchor="start"><tspan font-size="9.9" letter-spacing="0.067">KNWA-DT</tspan></text><text x="413.5" y="354.40" text-anchor="end">50</text><text x="460.8" y="354.40" text-anchor="end">(51.1)</text><text transform="translate(494.60 354.40) scale(1.1 1)" text-anchor="end"><tspan font-size="9.9" letter-spacing="0.067">NBC</tspan></text><text x="548.6" y="354.40" text-anchor="end">-22.2</text><text x="608.0" y="354.40" text-anchor="end">-113.0</text><text transform="translate(639.60 354.40) scale(1.1 1)" text-anchor="middle"><tspan font-size="9.9" letter-spacing="0.067">Tropo</tspan></text><text x="703.1" y="354.40" text-anchor="end">119.1</text><text x="743.6" y="354.40" text-anchor="end" fill="#5a1eb4">263°</text><text x="791.5" y="354.40" text-anchor="end" fill="#5a1eb4">(263°)</text></g>
<rect x="313.1" y="344.74" width="6.9" height="10.96" fill="#c40000"/><text x="316.6" y="354.10" text-anchor="middle" fill="#fff">C</text>
<g fill="#0a58d6"><text transform="translate(325.90 365.56) scale(1.1 1)" text-anchor="start"><tspan font-size="9.9" letter-spacing="0.067">KASN-DT</tspan></text><text x="413.5" y="365.56" text-anchor="end">39</text><text x="460.8" y="365.56" text-anchor="end">(38.1)</text><text transform="translate(494.60 365.56) scale(1.1 1)" text-anchor="end"><tspan font-size="9.9" letter-spacing="0.067">CW</tspan></text><text x="548.6" y="365.56" text-anchor="end">-22.7</text><text x="608.0" y="365.56" text-anchor="end">-113.6</text><text transform="translate(639.60 365.56) scale(1.1 1)" text-anchor="middle"><tspan font-size="9.9" letter-spacing="0.067">Tropo</tspan></text><text x="703.1" y="365.56" text-anchor="end">153.3</text><text x="743.6" y="365.56" text-anchor="end" fill="#1e82b4">188°</text><text x="791.5" y="365.56" text-anchor="end" fill="#1e82b4">(188°)</text></g>
<rect x="306.2" y="355.90" width="6.9" height="10.96" fill="#ff8686"/><text x="309.6" y="365.26" text-anchor="middle" fill="#fff">a</text>
<rect x="313.1" y="355.90" width="6.9" height="10.96" fill="#c40000"/><text x="316.6" y="365.26" text-anchor="middle" fill="#fff">C</text>
<g fill="#0a58d6"><text transform="translate(325.90 376.73) scale(1.1 1)" text-anchor="start"><tspan font-size="9.9" letter-spacing="0.067">KFSM-TV</tspan></text><text x="413.5" y="376.73" text-anchor="end">18</text><text x="460.8" y="376.73" text-anchor="end">(5.1)</text><text transform="translate(494.60 376.73) scale(1.1 1)" text-anchor="end"><tspan font-size="9.9" letter-spacing="0.067">CBS</tspan></text><text x="548.6" y="376.73" text-anchor="end">-22.8</text><text x="608.0" y="376.73" text-anchor="end">-113.6</text><text transform="translate(639.60 376.73) scale(1.1 1)" text-anchor="middle"><tspan font-size="9.9" letter-spacing="0.067">Tropo</tspan></text><text x="703.1" y="376.73" text-anchor="end">141.3</text><text x="743.6" y="376.73" text-anchor="end" fill="#2d1eae">247°</text><text x="791.5" y="376.73" text-anchor="end" fill="#2d1eae">(247°)</text></g>
<rect x="306.2" y="367.06" width="6.9" height="10.96" fill="#ff8686"/><text x="309.6" y="376.43" text-anchor="middle" fill="#fff">a</text>
<rect x="313.1" y="367.06" width="6.9" height="10.96" fill="#c40000"/><text x="316.6" y="376.43" text-anchor="middle" fill="#fff">C</text>
<g fill="#0a58d6"><text transform="translate(325.90 387.89) scale(1.1 1)" text-anchor="start"><tspan font-size="9.9" letter-spacing="0.067">K</tspan><tspan font-size="10.8" letter-spacing="-0.474">21</tspan><tspan font-size="9.9" letter-spacing="0.067">JS</tspan></text><text x="413.5" y="387.89" text-anchor="end">21</text><text x="460.8" y="387.89" text-anchor="end">(21.1)</text><text x="548.6" y="387.89" text-anchor="end">-23.1</text><text x="608.0" y="387.89" text-anchor="end">-114.0</text><text transform="translate(639.60 387.89) scale(1.1 1)" text-anchor="middle"><tspan font-size="10.8" letter-spacing="-0.474">2</tspan><tspan font-size="9.9" letter-spacing="0.067">Edge</tspan></text><text x="703.1" y="387.89" text-anchor="end">82.0</text><text x="743.6" y="387.89" text-anchor="end" fill="#351eaf">251°</text><text x="791.5" y="387.89" text-anchor="end" fill="#351eaf">(250°)</text></g>
<rect x="306.2" y="378.23" width="6.9" height="10.96" fill="#ff8686"/><text x="309.6" y="387.59" text-anchor="middle" fill="#fff">a</text>
<rect x="313.1" y="378.23" width="6.9" height="10.96" fill="#c40000"/><text x="316.6" y="387.59" text-anchor="middle" fill="#fff">C</text>
<g fill="#0a58d6"><text transform="translate(325.90 399.05) scale(1.1 1)" text-anchor="start"><tspan font-size="9.9" letter-spacing="0.067">KETS-DT</tspan></text><text x="413.5" y="399.05" text-anchor="end">7</text><text transform="translate(494.60 399.05) scale(1.1 1)" text-anchor="end"><tspan font-size="9.9" letter-spacing="0.067">PBS</tspan></text><text x="548.6" y="399.05" text-anchor="end">-23.4</text><text x="608.0" y="399.05" text-anchor="end">-114.2</text><text transform="translate(639.60 399.05) scale(1.1 1)" text-anchor="middle"><tspan font-size="9.9" letter-spacing="0.067">Tropo</tspan></text><text x="703.1" y="399.05" text-anchor="end">153.3</text><text x="743.6" y="399.05" text-anchor="end" fill="#1e82b4">188°</text><text x="791.5" y="399.05" text-anchor="end" fill="#1e82b4">(188°)</text></g>
<rect x="306.2" y="389.39" width="6.9" height="10.96" fill="#ff8686"/><text x="309.6" y="398.75" text-anchor="middle" fill="#fff">a</text>
<rect x="313.1" y="389.39" width="6.9" height="10.96" fill="#c40000"/><text x="316.6" y="398.75" text-anchor="middle" fill="#fff">C</text>
<g fill="#0a58d6"><text transform="translate(325.90 410.22) scale(1.1 1)" text-anchor="start"><tspan font-size="9.9" letter-spacing="0.067">KTVI-DT</tspan></text><text x="413.5" y="410.22" text-anchor="end">43</text><text x="460.8" y="410.22" text-anchor="end">(2.1)</text><text transform="translate(494.60 410.22) scale(1.1 1)" text-anchor="end"><tspan font-size="9.9" letter-spacing="0.067">Fox</tspan></text><text x="548.6" y="410.22" text-anchor="end">-23.7</text><text x="608.0" y="410.22" text-anchor="end">-114.5</text><text transform="translate(639.60 410.22) scale(1.1 1)" text-anchor="middle"><tspan font-size="9.9" letter-spacing="0.067">Tropo</tspan></text><text x="703.1" y="410.22" text-anchor="end">153.1</text><text x="743.6" y="410.22" text-anchor="end" fill="#de7028">31°</text><text x="791.5" y="410.22" text-anchor="end" fill="#de7028">(31°)</text></g>
<rect x="306.2" y="400.55" width="6.9" height="10.96" fill="#ff8686"/><text x="309.6" y="409.92" text-anchor="middle" fill="#fff">a</text>
<rect x="313.1" y="400.55" width="6.9" height="10.96" fill="#c40000"/><text x="316.6" y="409.92" text-anchor="middle" fill="#fff">C</text>
<g fill="#0a58d6"><text transform="translate(325.90 421.38) scale(1.1 1)" text-anchor="start"><tspan font-size="9.9" letter-spacing="0.067">KPOB-DT</tspan></text><text x="413.5" y="421.38" text-anchor="end">15</text><text x="460.8" y="421.38" text-anchor="end">(15.1)</text><text transform="translate(494.60 421.38) scale(1.1 1)" text-anchor="end"><tspan font-size="9.9" letter-spacing="0.067">ABC</tspan></text><text x="548.6" y="421.38" text-anchor="end">-24.1</text><text x="608.0" y="421.38" text-anchor="end">-114.9</text><text transform="translate(639.60 421.38) scale(1.1 1)" text-anchor="middle"><tspan font-size="10.8" letter-spacing="-0.474">2</tspan><tspan font-size="9.9" letter-spacing="0.067">Edge</tspan></text><text x="703.1" y="421.38" text-anchor="end">77.5</text><text x="743.6" y="421.38" text-anchor="end" fill="#96a028">82°</text><text x="791.5" y="421.38" text-anchor="end" fill="#96a028">(81°)</text></g>
<rect x="313.1" y="411.72" width="6.9" height="10.96" fill="#c40000"/><text x="316.6" y="421.08" text-anchor="middle" fill="#fff">C</text>
<g fill="#0a58d6"><text transform="translate(325.90 432.54) scale(1.1 1)" text-anchor="start"><tspan font-size="9.9" letter-spacing="0.067">KAFT</tspan></text><text x="413.5" y="432.54" text-anchor="end">9</text><text x="460.8" y="432.54" text-anchor="end">(13.1)</text><text transform="translate(494.60 432.54) scale(1.1 1)" text-anchor="end"><tspan font-size="9.9" letter-spacing="0.067">PBS</tspan></text><text x="548.6" y="432.54" text-anchor="end">-24.3</text><text x="608.0" y="432.54" text-anchor="end">-115.2</text><text transform="translate(639.60 432.54) scale(1.1 1)" text-anchor="middle"><tspan font-size="9.9" letter-spacing="0.067">Tropo</tspan></text><text x="703.1" y="432.54" text-anchor="end">135.2</text><text x="743.6" y="432.54" text-anchor="end" fill="#2b1ead">246°</text><text x="791.5" y="432.54" text-anchor="end" fill="#2b1ead">(245°)</text></g>
<rect x="306.2" y="422.88" width="6.9" height="10.96" fill="#ff8686"/><text x="309.6" y="432.24" text-anchor="middle" fill="#fff">a</text>
<rect x="313.1" y="422.88" width="6.9" height="10.96" fill="#c40000"/><text x="316.6" y="432.24" text-anchor="middle" fill="#fff">C</text>
<g fill="#0a58d6"><text transform="translate(325.90 443.70) scale(1.1 1)" text-anchor="start"><tspan font-size="9.9" letter-spacing="0.067">WHBQ-TV</tspan></text><text x="413.5" y="443.70" text-anchor="end">13</text><text x="460.8" y="443.70" text-anchor="end">(13.1)</text><text transform="translate(494.60 443.70) scale(1.1 1)" text-anchor="end"><tspan font-size="9.9" letter-spacing="0.067">Fox</tspan></text><text x="548.6" y="443.70" text-anchor="end">-24.3</text><text x="608.0" y="443.70" text-anchor="end">-115.2</text><text transform="translate(639.60 443.70) scale(1.1 1)" text-anchor="middle"><tspan font-size="9.9" letter-spacing="0.067">Tropo</tspan></text><text x="703.1" y="443.70" text-anchor="end">150.7</text><text x="743.6" y="443.70" text-anchor="end" fill="#1a8830">132°</text><text x="791.5" y="443.70" text-anchor="end" fill="#1a8830">(131°)</text></g>
<rect x="306.2" y="434.04" width="6.9" height="10.96" fill="#ff8686"/><text x="309.6" y="443.40" text-anchor="middle" fill="#fff">a</text>
<rect x="313.1" y="434.04" width="6.9" height="10.96" fill="#c40000"/><text x="316.6" y="443.40" text-anchor="middle" fill="#fff">C</text>
<g fill="#0a58d6"><text transform="translate(325.90 454.87) scale(1.1 1)" text-anchor="start"><tspan font-size="9.9" letter-spacing="0.067">KDKZ-LD</tspan></text><text x="413.5" y="454.87" text-anchor="end">18</text><text x="548.6" y="454.87" text-anchor="end">-24.8</text><text x="608.0" y="454.87" text-anchor="end">-115.6</text><text transform="translate(639.60 454.87) scale(1.1 1)" text-anchor="middle"><tspan font-size="10.8" letter-spacing="-0.474">2</tspan><tspan font-size="9.9" letter-spacing="0.067">Edge</tspan></text><text x="703.1" y="454.87" text-anchor="end">89.9</text><text x="743.6" y="454.87" text-anchor="end" fill="#da8a28">44°</text><text x="791.5" y="454.87" text-anchor="end" fill="#da8a28">(44°)</text></g>
<rect x="306.2" y="445.20" width="6.9" height="10.96" fill="#ff8686"/><text x="309.6" y="454.57" text-anchor="middle" fill="#fff">a</text>
<rect x="313.1" y="445.20" width="6.9" height="10.96" fill="#c40000"/><text x="316.6" y="454.57" text-anchor="middle" fill="#fff">C</text>
<g fill="#0a58d6"><text transform="translate(325.90 466.03) scale(1.1 1)" text-anchor="start"><tspan font-size="9.9" letter-spacing="0.067">KMOS-DT</tspan></text><text x="413.5" y="466.03" text-anchor="end">15</text><text x="460.8" y="466.03" text-anchor="end">(6.1)</text><text transform="translate(494.60 466.03) scale(1.1 1)" text-anchor="end"><tspan font-size="9.9" letter-spacing="0.067">PBS</tspan></text><text x="548.6" y="466.03" text-anchor="end">-25.0</text><text x="608.0" y="466.03" text-anchor="end">-115.8</text><text transform="translate(639.60 466.03) scale(1.1 1)" text-anchor="middle"><tspan font-size="9.9" letter-spacing="0.067">Tropo</tspan></text><text x="703.1" y="466.03" text-anchor="end">148.0</text><text x="743.6" y="466.03" text-anchor="end" fill="#d71e51">338°</text><text x="791.5" y="466.03" text-anchor="end" fill="#d71e51">(337°)</text></g>
<rect x="313.1" y="456.37" width="6.9" height="10.96" fill="#c40000"/><text x="316.6" y="465.73" text-anchor="middle" fill="#fff">C</text>
<g fill="#0a58d6"><text transform="translate(325.90 477.19) scale(1.1 1)" text-anchor="start"><tspan font-size="9.9" letter-spacing="0.067">KLRT-DT</tspan></text><text x="413.5" y="477.19" text-anchor="end">30</text><text x="460.8" y="477.19" text-anchor="end">(16.1)</text><text transform="translate(494.60 477.19) scale(1.1 1)" text-anchor="end"><tspan font-size="9.9" letter-spacing="0.067">Fox</tspan></text><text x="548.6" y="477.19" text-anchor="end">-25.3</text><text x="608.0" y="477.19" text-anchor="end">-116.1</text><text transform="translate(639.60 477.19) scale(1.1 1)" text-anchor="middle"><tspan font-size="9.9" letter-spacing="0.067">Tropo</tspan></text><text x="703.1" y="477.19" text-anchor="end">132.4</text><text x="743.6" y="477.19" text-anchor="end" fill="#1e78be">196°</text><text x="791.5" y="477.19" text-anchor="end" fill="#1e78be">(196°)</text></g>
<rect x="313.1" y="467.53" width="6.9" height="10.96" fill="#c40000"/><text x="316.6" y="476.89" text-anchor="middle" fill="#fff">C</text>
<g fill="#0a58d6"><text transform="translate(325.90 488.36) scale(1.1 1)" text-anchor="start"><tspan font-size="9.9" letter-spacing="0.067">KRBK</tspan></text><text x="413.5" y="488.36" text-anchor="end">49</text><text x="460.8" y="488.36" text-anchor="end">(49.1)</text><text transform="translate(494.60 488.36) scale(1.1 1)" text-anchor="end"><tspan font-size="9.9" letter-spacing="0.067">Fox</tspan></text><text x="548.6" y="488.36" text-anchor="end">-25.8</text><text x="608.0" y="488.36" text-anchor="end">-116.6</text><text transform="translate(639.60 488.36) scale(1.1 1)" text-anchor="middle"><tspan font-size="9.9" letter-spacing="0.067">Tropo</tspan></text><text x="703.1" y="488.36" text-anchor="end">87.6</text><text x="743.6" y="488.36" text-anchor="end" fill="#c41eb9">298°</text><text x="791.5" y="488.36" text-anchor="end" fill="#c41eb9">(297°)</text></g>
<g fill="#0a58d6"><text transform="translate(325.90 499.52) scale(1.1 1)" text-anchor="start"><tspan font-size="9.9" letter-spacing="0.067">KODE-DT</tspan></text><text x="413.5" y="499.52" text-anchor="end">43</text><text x="460.8" y="499.52" text-anchor="end">(12.1)</text><text transform="translate(494.60 499.52) scale(1.1 1)" text-anchor="end"><tspan font-size="9.9" letter-spacing="0.067">ABC</tspan></text><text x="548.6" y="499.52" text-anchor="end">-26.6</text><text x="608.0" y="499.52" text-anchor="end">-117.5</text><text transform="translate(639.60 499.52) scale(1.1 1)" text-anchor="middle"><tspan font-size="9.9" letter-spacing="0.067">Tropo</tspan></text><text x="703.1" y="499.52" text-anchor="end">152.7</text><text x="743.6" y="499.52" text-anchor="end" fill="#951eb9">282°</text><text x="791.5" y="499.52" text-anchor="end" fill="#951eb9">(282°)</text></g>
<rect x="306.2" y="489.86" width="6.9" height="10.96" fill="#ff8686"/><text x="309.6" y="499.22" text-anchor="middle" fill="#fff">a</text>
<rect x="313.1" y="489.86" width="6.9" height="10.96" fill="#c40000"/><text x="316.6" y="499.22" text-anchor="middle" fill="#fff">C</text>
<g fill="#0a58d6"><text transform="translate(325.90 510.68) scale(1.1 1)" text-anchor="start"><tspan font-size="9.9" letter-spacing="0.067">KATV</tspan></text><text x="413.5" y="510.68" text-anchor="end">22</text><text x="460.8" y="510.68" text-anchor="end">(7.1)</text><text transform="translate(494.60 510.68) scale(1.1 1)" text-anchor="end"><tspan font-size="9.9" letter-spacing="0.067">ABC</tspan></text><text x="548.6" y="510.68" text-anchor="end">-27.1</text><text x="608.0" y="510.68" text-anchor="end">-118.0</text><text transform="translate(639.60 510.68) scale(1.1 1)" text-anchor="middle"><tspan font-size="9.9" letter-spacing="0.067">Tropo</tspan></text><text x="703.1" y="510.68" text-anchor="end">132.5</text><text x="743.6" y="510.68" text-anchor="end" fill="#1e78be">196°</text><text x="791.5" y="510.68" text-anchor="end" fill="#1e78be">(196°)</text></g>
<rect x="306.2" y="501.02" width="6.9" height="10.96" fill="#ff8686"/><text x="309.6" y="510.38" text-anchor="middle" fill="#fff">a</text>
<rect x="313.1" y="501.02" width="6.9" height="10.96" fill="#c40000"/><text x="316.6" y="510.38" text-anchor="middle" fill="#fff">C</text>
<g fill="#0a58d6"><text transform="translate(325.90 521.85) scale(1.1 1)" text-anchor="start"><tspan font-size="9.9" letter-spacing="0.067">KRBK</tspan></text><text x="413.5" y="521.85" text-anchor="end">49</text><text x="460.8" y="521.85" text-anchor="end">(49.1)</text><text transform="translate(494.60 521.85) scale(1.1 1)" text-anchor="end"><tspan font-size="9.9" letter-spacing="0.067">Fox</tspan></text><text x="548.6" y="521.85" text-anchor="end">-28.2</text><text x="608.0" y="521.85" text-anchor="end">-119.0</text><text transform="translate(639.60 521.85) scale(1.1 1)" text-anchor="middle"><tspan font-size="9.9" letter-spacing="0.067">Tropo</tspan></text><text x="703.1" y="521.85" text-anchor="end">95.5</text><text x="743.6" y="521.85" text-anchor="end" fill="#d71e6e">328°</text><text x="791.5" y="521.85" text-anchor="end" fill="#d71e6e">(328°)</text></g>
<g fill="#0a58d6"><text transform="translate(325.90 533.01) scale(1.1 1)" text-anchor="start"><tspan font-size="9.9" letter-spacing="0.067">KTKO-LP</tspan></text><text x="413.5" y="533.01" text-anchor="end">8</text><text x="460.8" y="533.01" text-anchor="end">(8.1)</text><text x="548.6" y="533.01" text-anchor="end">-28.5</text><text x="608.0" y="533.01" text-anchor="end">-119.3</text><text transform="translate(639.60 533.01) scale(1.1 1)" text-anchor="middle"><tspan font-size="10.8" letter-spacing="-0.474">2</tspan><tspan font-size="9.9" letter-spacing="0.067">Edge</tspan></text><text x="703.1" y="533.01" text-anchor="end">82.2</text><text x="743.6" y="533.01" text-anchor="end" fill="#2f1eae">248°</text><text x="791.5" y="533.01" text-anchor="end" fill="#2f1eae">(248°)</text></g>
<rect x="306.2" y="523.35" width="6.9" height="10.96" fill="#ff8686"/><text x="309.6" y="532.71" text-anchor="middle" fill="#fff">a</text>
<rect x="313.1" y="523.35" width="6.9" height="10.96" fill="#c40000"/><text x="316.6" y="532.71" text-anchor="middle" fill="#fff">C</text>
<g fill="#0a58d6"><text transform="translate(325.90 544.17) scale(1.1 1)" text-anchor="start"><tspan font-size="9.9" letter-spacing="0.067">K</tspan><tspan font-size="10.8" letter-spacing="-0.474">04</tspan><tspan font-size="9.9" letter-spacing="0.067">RA-D</tspan></text><text x="413.5" y="544.17" text-anchor="end">4</text><text x="548.6" y="544.17" text-anchor="end">-28.9</text><text x="608.0" y="544.17" text-anchor="end">-119.7</text><text transform="translate(639.60 544.17) scale(1.1 1)" text-anchor="middle"><tspan font-size="9.9" letter-spacing="0.067">Tropo</tspan></text><text x="703.1" y="544.17" text-anchor="end">128.2</text><text x="743.6" y="544.17" text-anchor="end" fill="#1e33b2">229°</text><text x="791.5" y="544.17" text-anchor="end" fill="#1e33b2">(229°)</text></g>
<g fill="#0a58d6"><text transform="translate(325.90 555.34) scale(1.1 1)" text-anchor="start"><tspan font-size="9.9" letter-spacing="0.067">KHOG-DT</tspan></text><text x="413.5" y="555.34" text-anchor="end">15</text><text x="460.8" y="555.34" text-anchor="end">(29.1)</text><text transform="translate(494.60 555.34) scale(1.1 1)" text-anchor="end"><tspan font-size="9.9" letter-spacing="0.067">ABC</tspan></text><text x="548.6" y="555.34" text-anchor="end">-29.3</text><text x="608.0" y="555.34" text-anchor="end">-120.2</text><text transform="translate(639.60 555.34) scale(1.1 1)" text-anchor="middle"><tspan font-size="9.9" letter-spacing="0.067">Tropo</tspan></text><text x="703.1" y="555.34" text-anchor="end">132.7</text><text x="743.6" y="555.34" text-anchor="end" fill="#381eb0">252°</text><text x="791.5" y="555.34" text-anchor="end" fill="#381eb0">(251°)</text></g>
<rect x="306.2" y="545.67" width="6.9" height="10.96" fill="#ff8686"/><text x="309.6" y="555.04" text-anchor="middle" fill="#fff">a</text>
<rect x="313.1" y="545.67" width="6.9" height="10.96" fill="#c40000"/><text x="316.6" y="555.04" text-anchor="middle" fill="#fff">C</text>
<g fill="#0a58d6"><text transform="translate(325.90 566.50) scale(1.1 1)" text-anchor="start"><tspan font-size="9.9" letter-spacing="0.067">KFVS-DT</tspan></text><text x="413.5" y="566.50" text-anchor="end">12</text><text x="460.8" y="566.50" text-anchor="end">(12.1)</text><text transform="translate(494.60 566.50) scale(1.1 1)" text-anchor="end"><tspan font-size="9.9" letter-spacing="0.067">CBS</tspan></text><text x="548.6" y="566.50" text-anchor="end">-29.3</text><text x="608.0" y="566.50" text-anchor="end">-120.2</text><text transform="translate(639.60 566.50) scale(1.1 1)" text-anchor="middle"><tspan font-size="9.9" letter-spacing="0.067">Tropo</tspan></text><text x="703.1" y="566.50" text-anchor="end">139.8</text><text x="743.6" y="566.50" text-anchor="end" fill="#c8aa28">66°</text><text x="791.5" y="566.50" text-anchor="end" fill="#c8aa28">(66°)</text></g>
<rect x="306.2" y="556.84" width="6.9" height="10.96" fill="#ff8686"/><text x="309.6" y="566.20" text-anchor="middle" fill="#fff">a</text>
<rect x="313.1" y="556.84" width="6.9" height="10.96" fill="#c40000"/><text x="316.6" y="566.20" text-anchor="middle" fill="#fff">C</text>
<g fill="#0a58d6"><text transform="translate(325.90 577.66) scale(1.1 1)" text-anchor="start"><tspan font-size="9.9" letter-spacing="0.067">KRCG-DT</tspan></text><text x="413.5" y="577.66" text-anchor="end">12</text><text x="460.8" y="577.66" text-anchor="end">(13.1)</text><text transform="translate(494.60 577.66) scale(1.1 1)" text-anchor="end"><tspan font-size="9.9" letter-spacing="0.067">CBS</tspan></text><text x="548.6" y="577.66" text-anchor="end">-29.3</text><text x="608.0" y="577.66" text-anchor="end">-120.2</text><text transform="translate(639.60 577.66) scale(1.1 1)" text-anchor="middle"><tspan font-size="9.9" letter-spacing="0.067">Tropo</tspan></text><text x="703.1" y="577.66" text-anchor="end">142.0</text><text x="743.6" y="577.66" text-anchor="end" fill="#d71e2f">354°</text><text x="791.5" y="577.66" text-anchor="end" fill="#d71e2f">(354°)</text></g>
<rect x="306.2" y="568.00" width="6.9" height="10.96" fill="#ff8686"/><text x="309.6" y="577.36" text-anchor="middle" fill="#fff">a</text>
<rect x="313.1" y="568.00" width="6.9" height="10.96" fill="#c40000"/><text x="316.6" y="577.36" text-anchor="middle" fill="#fff">C</text>
<g fill="#0a58d6"><text transform="translate(325.90 588.82) scale(1.1 1)" text-anchor="start"><tspan font-size="9.9" letter-spacing="0.067">KVTN</tspan></text><text x="413.5" y="588.82" text-anchor="end">24</text><text x="460.8" y="588.82" text-anchor="end">(25.1)</text><text transform="translate(494.60 588.82) scale(1.1 1)" text-anchor="end"><tspan font-size="9.9" letter-spacing="0.067">Ind</tspan></text><text x="548.6" y="588.82" text-anchor="end">-29.9</text><text x="608.0" y="588.82" text-anchor="end">-120.8</text><text transform="translate(639.60 588.82) scale(1.1 1)" text-anchor="middle"><tspan font-size="9.9" letter-spacing="0.067">Tropo</tspan></text><text x="703.1" y="588.82" text-anchor="end">146.1</text><text x="743.6" y="588.82" text-anchor="end" fill="#1e84b2">185°</text><text x="791.5" y="588.82" text-anchor="end" fill="#1e84b2">(184°)</text></g>
<rect x="306.2" y="579.16" width="6.9" height="10.96" fill="#ff8686"/><text x="309.6" y="588.52" text-anchor="middle" fill="#fff">a</text>
<rect x="313.1" y="579.16" width="6.9" height="10.96" fill="#c40000"/><text x="316.6" y="588.52" text-anchor="middle" fill="#fff">C</text>
<g fill="#0a58d6"><text transform="translate(325.90 599.99) scale(1.1 1)" text-anchor="start"><tspan font-size="9.9" letter-spacing="0.067">KMIZ</tspan></text><text x="413.5" y="599.99" text-anchor="end">17</text><text x="460.8" y="599.99" text-anchor="end">(17.1)</text><text transform="translate(494.60 599.99) scale(1.1 1)" text-anchor="end"><tspan font-size="9.9" letter-spacing="0.067">ABC</tspan></text><text x="548.6" y="599.99" text-anchor="end">-30.4</text><text x="608.0" y="599.99" text-anchor="end">-121.2</text><text transform="translate(639.60 599.99) scale(1.1 1)" text-anchor="middle"><tspan font-size="9.9" letter-spacing="0.067">Tropo</tspan></text><text x="703.1" y="599.99" text-anchor="end">152.2</text><text x="743.6" y="599.99" text-anchor="end" fill="#d71e3d">345°</text><text x="791.5" y="599.99" text-anchor="end" fill="#d71e3d">(345°)</text></g>
<rect x="313.1" y="590.32" width="6.9" height="10.96" fill="#c40000"/><text x="316.6" y="599.69" text-anchor="middle" fill="#fff">C</text>
</g>
<g id="legend" font-size="11.05" font-family='"DejaVu Sans", "Liberation Sans", sans-serif'>
<rect x="346.8" y="617.2" width="6.6" height="11.4" fill="#c40000"/><text x="350.3" y="626.6" font-family='"DejaVu Sans Mono", "Liberation Mono", monospace' font-size="10.8" text-anchor="middle" fill="#fff">C</text>
<text x="360.3" y="627.6" fill="#000">= Co-channel warning</text>
<rect x="557.8" y="617.2" width="6.6" height="11.4" fill="#ff8686"/><text x="561.3" y="626.6" font-family='"DejaVu Sans Mono", "Liberation Mono", monospace' font-size="10.8" text-anchor="middle" fill="#fff">a</text>
<text x="571.3" y="627.6" fill="#000">= Adjacent channel warning</text>
</g>
<g id="charts">
<rect x="38.8" y="633" width="10.3" height="127.4" fill="#e8e8e8"/>
<rect x="70.3" y="633" width="30.6" height="127.4" fill="#e8e8e8"/>
<path d="M8.2 761 V632.5 H12.6 M65.3 632.5 H110.4 M162.6 632.5 H173.4 V761" stroke="#000" stroke-width="1.5" fill="none"/>
<path d="M214.9 761 V632.5 H483.5 M524 632.5 H792.3 V761" stroke="#000" stroke-width="1.5" fill="none"/>
<rect x="18" y="627" width="43" height="10" fill="#fff"/>
<g font-family='"Liberation Sans", "DejaVu Sans", sans-serif' font-weight="bold" text-anchor="middle" fill="#000">
<text x="39.65" y="636.20" font-size="11.34">VHF Lo</text>
<text x="137.65" y="636.20" font-size="11.44">VHF Hi</text>
<text x="503.50" y="636.20" font-size="11.09">UHF</text>
</g>
<g font-family='"Liberation Sans", "DejaVu Sans", sans-serif' text-anchor="middle" fill="#000">
<text x="193.90" y="635.70" font-size="11.09">dBm</text>
</g>
<g font-family='"Liberation Sans", "DejaVu Sans", sans-serif' font-size="10.2" letter-spacing="0.45" fill="#000">
<text x="201.6" y="647.47" text-anchor="end">-10</text>
<text x="201.6" y="660.24" text-anchor="end">-20</text>
<text x="201.6" y="673.01" text-anchor="end">-30</text>
<text x="201.6" y="685.78" text-anchor="end">-40</text>
<text x="201.6" y="698.55" text-anchor="end">-50</text>
<text x="201.6" y="711.32" text-anchor="end">-60</text>
<text x="201.6" y="724.09" text-anchor="end">-70</text>
<text x="201.6" y="736.86" text-anchor="end">-80</text>
<text x="201.6" y="749.63" text-anchor="end">-90</text>
</g>
<g font-family='"Liberation Sans", "DejaVu Sans", sans-serif' text-anchor="middle" fill="#000">
<text x="194.00" y="762.30" font-size="9.13">Channel</text>
</g>
<g font-family='"DejaVu Sans", "Liberation Sans", sans-serif' font-size="6.3" text-anchor="middle" fill="#000">
<text x="13.30" y="761.8">2</text>
<text x="34.20" y="761.8">4</text>
<text x="55.30" y="761.8">5</text>
<text x="65.30" y="761.8">6</text>
<text x="106.10" y="761.8">7</text>
<text x="127.10" y="761.8">9</text>
<text x="148.10" y="761.8">11</text>
<text x="169.10" y="761.8">13</text>
</g>
<path d="M8.20 760.4 H10.50 M16.10 760.4 H31.40 M37.00 760.4 H52.50 M58.10 760.4 H62.50 M68.10 760.4 H103.30 M108.90 760.4 H124.30 M129.90 760.4 H143.30 M152.90 760.4 H164.30 " stroke="#000" stroke-width="1.3" fill="none"/>
<g font-family='"DejaVu Sans", "Liberation Sans", sans-serif' font-size="6.3" text-anchor="middle" fill="#000">
<text x="220.00" y="761.8">14</text>
<text x="240.57" y="761.8">16</text>
<text x="271.43" y="761.8">19</text>
<text x="302.29" y="761.8">22</text>
<text x="333.15" y="761.8">25</text>
<text x="364.00" y="761.8">28</text>
<text x="394.86" y="761.8">31</text>
<text x="425.72" y="761.8">34</text>
<text x="456.58" y="761.8">37</text>
<text x="487.44" y="761.8">40</text>
<text x="518.29" y="761.8">43</text>
<text x="549.15" y="761.8">46</text>
<text x="580.01" y="761.8">49</text>
<text x="610.87" y="761.8">52</text>
<text x="641.73" y="761.8">55</text>
<text x="672.58" y="761.8">58</text>
<text x="703.44" y="761.8">61</text>
<text x="734.30" y="761.8">64</text>
<text x="765.16" y="761.8">67</text>
<text x="785.73" y="761.8">69</text>
</g>
<path d="M214.90 760.4 H215.20 M224.80 760.4 H235.77 M245.37 760.4 H266.63 M276.23 760.4 H297.49 M307.09 760.4 H328.35 M337.95 760.4 H359.20 M368.80 760.4 H390.06 M399.66 760.4 H420.92 M430.52 760.4 H451.78 M461.38 760.4 H482.64 M492.24 760.4 H513.49 M523.09 760.4 H544.35 M553.95 760.4 H575.21 M584.81 760.4 H606.07 M615.67 760.4 H636.93 M646.53 760.4 H667.78 M677.38 760.4 H698.64 M708.24 760.4 H729.50 M739.10 760.4 H760.36 M769.96 760.4 H780.93 M790.53 760.4 H792.30" stroke="#000" stroke-width="1.3" fill="none"/>
<path d="M9 645.50 H173 M216 645.50 H792" stroke="#000" stroke-width="1" stroke-dasharray="1 1.4" stroke-opacity="0.62" fill="none"/>
<path d="M9 658.50 H173 M216 658.50 H792" stroke="#000" stroke-width="1" stroke-dasharray="1 1.4" stroke-opacity="0.62" fill="none"/>
<path d="M9 671.50 H173 M216 671.50 H792" stroke="#000" stroke-width="1" stroke-dasharray="1 1.4" stroke-opacity="0.62" fill="none"/>
<path d="M9 683.50 H173 M216 683.50 H792" stroke="#000" stroke-width="1" stroke-dasharray="1 1.4" stroke-opacity="0.62" fill="none"/>
<path d="M9 696.50 H173 M216 696.50 H792" stroke="#000" stroke-width="1" stroke-dasharray="1 1.4" stroke-opacity="0.62" fill="none"/>
<path d="M9 709.50 H173 M216 709.50 H792" stroke="#000" stroke-width="1" stroke-dasharray="1 1.4" stroke-opacity="0.62" fill="none"/>
<path d="M9 722.50 H173 M216 722.50 H792" stroke="#000" stroke-width="1" stroke-dasharray="1 1.4" stroke-opacity="0.62" fill="none"/>
<path d="M9 734.50 H173 M216 734.50 H792" stroke="#000" stroke-width="1" stroke-dasharray="1 1.4" stroke-opacity="0.62" fill="none"/>
<path d="M9 747.50 H173 M216 747.50 H792" stroke="#000" stroke-width="1" stroke-dasharray="1 1.4" stroke-opacity="0.62" fill="none"/>
<g clip-path="url(#cu)"><g opacity="1"><rect x="492.87" y="741.20" width="9.7" height="3.1" rx="0.9" fill="#7a0acc" stroke="#2a0a66" stroke-width="0.7" stroke-opacity="0.75"/><text transform="translate(501.02 736.70) rotate(-90)" font-family='"DejaVu Sans Condensed", "DejaVu Sans", sans-serif' font-size="9.2" letter-spacing="0.6" fill="#7a0acc">K41HC</text></g></g>
<g clip-path="url(#cu)"><g opacity="1"><rect x="338.58" y="751.93" width="9.7" height="3.1" rx="0.9" fill="#0a58d6" stroke="#0a1c60" stroke-width="0.7" stroke-opacity="0.75"/><text transform="translate(346.73 747.43) rotate(-90)" font-family='"DejaVu Sans Condensed", "DejaVu Sans", sans-serif' font-size="9.2" letter-spacing="0.6" fill="#0a58d6">K26GS-D</text></g></g>
<g clip-path="url(#cv)"><g opacity="0.48"><rect x="99.90" y="746.45" width="12.4" height="6.4" rx="3.2" fill="#ffee00"/><rect x="101.70" y="748.10" width="8.8" height="3.1" rx="0.8" fill="#0a58d6"/><text transform="translate(109.40 743.60) rotate(-90)" font-family='"DejaVu Sans Condensed", "DejaVu Sans", sans-serif' font-size="9.2" letter-spacing="0.6" fill="#0a58d6">K07XL-D</text></g></g>
<g clip-path="url(#cu)"><g opacity="0.48"><rect x="276.87" y="744.14" width="9.7" height="3.1" rx="0.9" fill="#0a58d6" stroke="#0a1c60" stroke-width="0.7" stroke-opacity="0.75"/><text transform="translate(285.02 739.64) rotate(-90)" font-family='"DejaVu Sans Condensed", "DejaVu Sans", sans-serif' font-size="9.2" letter-spacing="0.6" fill="#0a58d6">KTEJ</text></g></g>
<g clip-path="url(#cu)"><g opacity="0.48"><rect x="307.72" y="743.37" width="9.7" height="3.1" rx="0.9" fill="#0a58d6" stroke="#0a1c60" stroke-width="0.7" stroke-opacity="0.75"/><text transform="translate(315.87 738.87) rotate(-90)" font-family='"DejaVu Sans Condensed", "DejaVu Sans", sans-serif' font-size="9.2" letter-spacing="0.6" fill="#0a58d6">KOZK-DT</text></g></g>
<g clip-path="url(#cv)"><g opacity="1"><rect x="131.40" y="735.72" width="12.4" height="6.4" rx="3.2" fill="#ffee00"/><rect x="133.20" y="737.37" width="8.8" height="3.1" rx="0.8" fill="#0a58d6"/><text transform="translate(140.90 732.87) rotate(-90)" font-family='"DejaVu Sans Condensed", "DejaVu Sans", sans-serif' font-size="9.2" letter-spacing="0.6" fill="#0a58d6">KOLR</text></g></g>
<g clip-path="url(#cu)"><g opacity="0.48"><rect x="359.15" y="736.73" width="9.7" height="3.1" rx="0.9" fill="#0a58d6" stroke="#0a1c60" stroke-width="0.7" stroke-opacity="0.75"/><text transform="translate(367.30 732.23) rotate(-90)" font-family='"DejaVu Sans Condensed", "DejaVu Sans", sans-serif' font-size="9.2" letter-spacing="0.6" fill="#0a58d6">KOZL-TV</text></g></g>
<g clip-path="url(#cu)"><g opacity="1"><rect x="523.73" y="733.92" width="9.7" height="3.1" rx="0.9" fill="#0a58d6" stroke="#0a1c60" stroke-width="0.7" stroke-opacity="0.75"/><text transform="translate(531.88 729.42) rotate(-90)" font-family='"DejaVu Sans Condensed", "DejaVu Sans", sans-serif' font-size="9.2" letter-spacing="0.6" fill="#0a58d6">KYTV</text></g></g>
<g clip-path="url(#cu)"><g opacity="1"><rect x="266.58" y="731.11" width="9.7" height="3.1" rx="0.9" fill="#0a58d6" stroke="#0a1c60" stroke-width="0.7" stroke-opacity="0.75"/><text transform="translate(274.73 726.61) rotate(-90)" font-family='"DejaVu Sans Condensed", "DejaVu Sans", sans-serif' font-size="9.2" letter-spacing="0.6" fill="#0a58d6">KSPR-DT</text></g></g>
<g clip-path="url(#cv)"><g opacity="1"><rect x="162.90" y="728.57" width="12.4" height="6.4" rx="3.2" fill="#ffee00"/><rect x="164.70" y="730.22" width="8.8" height="3.1" rx="0.8" fill="#0a58d6"/><text transform="translate(172.40 725.72) rotate(-90)" font-family='"DejaVu Sans Condensed", "DejaVu Sans", sans-serif' font-size="9.2" letter-spacing="0.6" fill="#0a58d6">KEMV</text></g></g>
<g clip-path="url(#cv)"><g opacity="1"><rect x="110.40" y="723.59" width="12.4" height="6.4" rx="3.2" fill="#ffee00"/><rect x="112.20" y="725.24" width="8.8" height="3.1" rx="0.8" fill="#0a58d6"/><text transform="translate(119.90 720.74) rotate(-90)" font-family='"DejaVu Sans Condensed", "DejaVu Sans", sans-serif' font-size="9.2" letter-spacing="0.6" fill="#0a58d6">KAIT</text></g></g>
<g clip-path="url(#cu)"><g opacity="1"><rect x="462.01" y="676.46" width="9.7" height="3.1" rx="0.9" fill="#7a0acc" stroke="#2a0a66" stroke-width="0.7" stroke-opacity="0.75"/><text transform="translate(470.16 671.96) rotate(-90)" font-family='"DejaVu Sans Condensed", "DejaVu Sans", sans-serif' font-size="9.2" letter-spacing="0.6" fill="#7a0acc">K38HE</text></g></g>
</g>
</g>
</svg>
</body></html>
